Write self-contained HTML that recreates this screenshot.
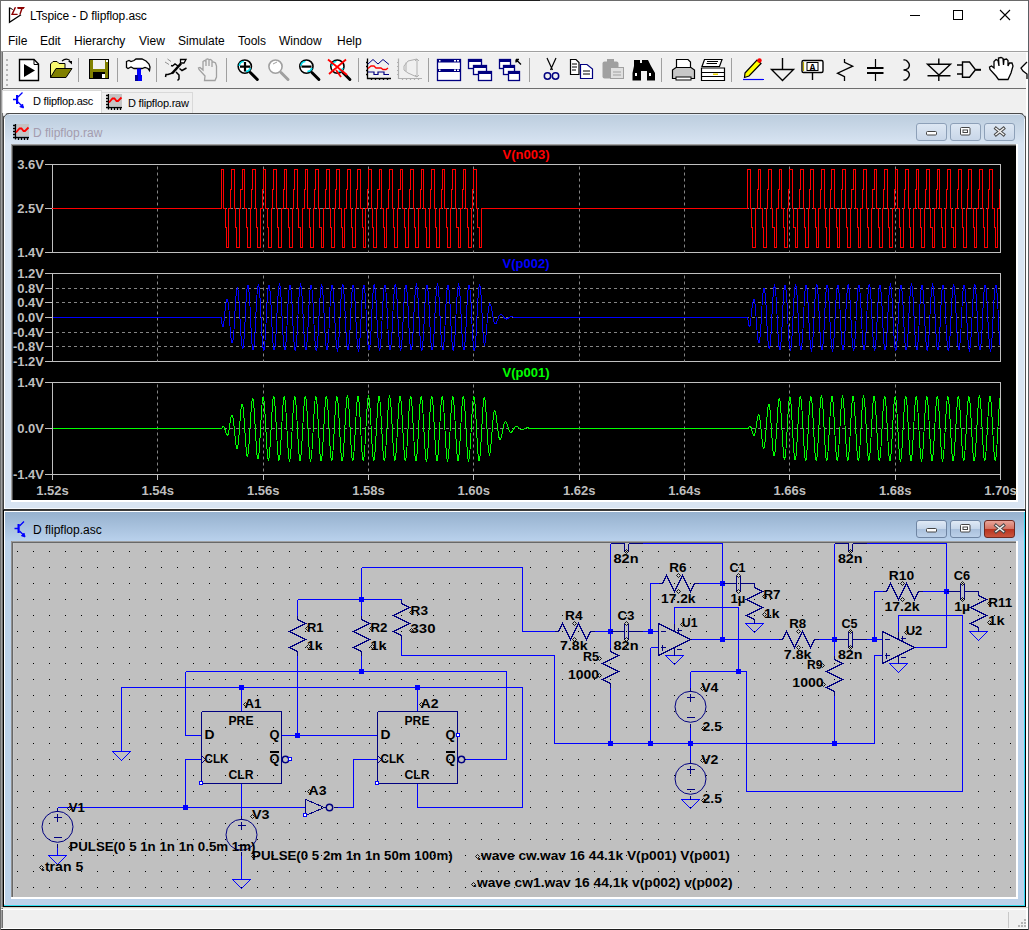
<!DOCTYPE html><html><head><meta charset="utf-8"><style>
html,body{margin:0;padding:0;}
body{width:1029px;height:930px;overflow:hidden;position:relative;background:#f0f0f0;font-family:"Liberation Sans",sans-serif;}
.a{position:absolute;}
.t{position:absolute;white-space:nowrap;font-size:12px;color:#000;line-height:14px;}
</style></head><body>

<div class="a" style="left:0px;top:0px;width:1029px;height:1px;background:#6a6a6a;"></div>
<div class="a" style="left:270px;top:0px;width:270px;height:1px;background:#1e1e1e;"></div>
<div class="a" style="left:0px;top:929px;width:1029px;height:1px;background:#1e1e1e;"></div>
<div class="a" style="left:0px;top:0px;width:1px;height:930px;background:#6e6e6e;"></div>
<div class="a" style="left:1px;top:51px;width:1px;height:878px;background:#a0a0a0;"></div>
<div class="a" style="left:2px;top:51px;width:1px;height:878px;background:#707070;"></div>
<div class="a" style="left:1028px;top:0px;width:1px;height:930px;background:#5a5e64;"></div>
<div class="a" style="left:1026px;top:51px;width:2px;height:878px;background:#ffffff;"></div>
<div class="a" style="left:1px;top:1px;width:1027px;height:50px;background:#fff;"></div>
<div class="a" style="left:1px;top:51px;width:1027px;height:1px;background:#a0a0a0;"></div>
<div class="t" style="left:30px;top:9px;font-size:12px;letter-spacing:-0.1px;">LTspice - D flipflop.asc</div>
<svg class="a" style="left:0;top:0" width="30" height="30" viewBox="0 0 30 30">
<path d="M9.5 7.5 V22.3 L21 14.8" fill="none" stroke="#000" stroke-width="1.3"/>
<path d="M9.8 7.8 L12.8 9.6" fill="none" stroke="#000" stroke-width="1"/>
<path d="M14.6 7.2 H16.2 L13.2 13.8 H17.4 L17.8 14.9 H11 Z" fill="#8b0000"/>
<path d="M17.2 7.1 H24.9 L23.6 8.9 H22.6 L20.6 14.4 H19.2 L21 8.9 H17.6 Z" fill="#8b0000"/>
</svg>
<div class="a" style="left:910px;top:15px;width:10px;height:1px;background:#000;"></div>
<div class="a" style="left:953px;top:10px;width:8px;height:8px;border:1px solid #000;"></div>
<svg class="a" style="left:999px;top:9px" width="12" height="12" viewBox="0 0 12 12"><path d="M1 1 L11 11 M11 1 L1 11" stroke="#000" stroke-width="1.1"/></svg>
<div class="t" style="left:8px;top:34px;">File</div>
<div class="t" style="left:40px;top:34px;">Edit</div>
<div class="t" style="left:74px;top:34px;">Hierarchy</div>
<div class="t" style="left:139px;top:34px;">View</div>
<div class="t" style="left:178px;top:34px;">Simulate</div>
<div class="t" style="left:238px;top:34px;">Tools</div>
<div class="t" style="left:279px;top:34px;">Window</div>
<div class="t" style="left:337px;top:34px;">Help</div>
<div class="a" style="left:3px;top:52px;width:1023px;height:1px;background:#f8f8f8;"></div>
<div class="a" style="left:3px;top:88px;width:1023px;height:1px;background:#6e6e6e;"></div>
<div class="a" style="left:3px;top:89px;width:1023px;height:1px;background:#fafafa;"></div>
<div class="a" style="left:6px;top:59px;width:2px;height:2px;background:#b4b4b4;"></div>
<div class="a" style="left:6px;top:64px;width:2px;height:2px;background:#b4b4b4;"></div>
<div class="a" style="left:6px;top:69px;width:2px;height:2px;background:#b4b4b4;"></div>
<div class="a" style="left:6px;top:74px;width:2px;height:2px;background:#b4b4b4;"></div>
<div class="a" style="left:6px;top:79px;width:2px;height:2px;background:#b4b4b4;"></div>
<div class="a" style="left:6px;top:84px;width:2px;height:2px;background:#b4b4b4;"></div>
<svg class="a" style="left:0;top:0" width="1029" height="90" viewBox="0 0 1029 90"><path d="M19.5 59.5 H34 L38.5 64 V80.5 H19.5 Z" fill="#fff" stroke="#000" stroke-width="1.4"/>
<path d="M34 59.5 V64.5 H38.5" fill="none" stroke="#000" stroke-width="1"/>
<path d="M24 64 L35 70.5 L24 77 Z" fill="#000"/>
<path d="M50.5 77.5 V64 L53 61.5 H57 L59 63.5 H65 V68.5" fill="#f8f870" stroke="#000" stroke-width="1"/>
<path d="M50.5 77.5 L56 68.5 H72 L66 77.5 Z" fill="#808000" stroke="#000" stroke-width="1"/>
<path d="M62 61 Q66 57.5 70 60.5" fill="none" stroke="#000" stroke-width="1.2"/><path d="M68 61 H72 V64.5 Z" fill="#000"/>
<rect x="89.5" y="59.5" width="19" height="19" fill="#808000" stroke="#000" stroke-width="1"/>
<rect x="93" y="60" width="12" height="9" fill="#f0f0f0"/>
<rect x="93" y="72" width="12" height="7" fill="#000"/>
<rect x="102" y="74" width="3" height="4" fill="#fff"/>
<rect x="106" y="60" width="2" height="2" fill="#fff"/>
<path d="M126.5 61.5 L129 60.5 L131 61.5 L134 60.5 L136 59 H142 L146 61 L149 64 L150 67 L149.5 70.5 L148 68.5 L145 67.5 L142 68.5 H134 L131 67 L128 68.5 L126.5 67.5 Z" fill="#fff" stroke="#000" stroke-width="1.3"/>
<rect x="137" y="68.5" width="4" height="12.5" fill="#0000ff"/><rect x="135" y="75" width="7" height="6" fill="#0000ff"/><rect x="135" y="75" width="3" height="6" fill="#00009a"/>
<path d="M180.5 59.5 H186 L184 63 H180.5 Z" fill="#fff" stroke="#000" stroke-width="1.3"/>
<path d="M181 63.5 L172 73.5" stroke="#000" stroke-width="2.6" fill="none"/>
<path d="M178 66 L175 64 L172.5 66 L171 65.5 M179.5 68.5 L182 70.5 L186.5 68 M172.5 73 L168 74.5 L166 74.5 L165.5 77 M176 72 L179 75 L179 79 L177.5 80.5" stroke="#000" stroke-width="1.5" fill="none"/>
<path d="M165 62 L169 64.5 M167.5 59 L171 61.5" stroke="#909090" stroke-width="1" fill="none"/>
<path d="M205 76 L199 69.5 L198.5 68 L200 67.5 L203 70 V61.5 L204.5 60.5 L206 61.5 V66 V59.5 L207.5 59 L209 59.5 V66 V60 L210.5 59.5 L212 60.5 V67 V62.5 L213.5 62 L215.5 63 L216.5 66 V77 L215 80.5 H204.5 Z" fill="none" stroke="#a0a0a0" stroke-width="1.3"/>
<line x1="250.3" y1="72.5" x2="257.3" y2="79.5" stroke="#000" stroke-width="3" stroke-linecap="round"/>
<circle cx="244.8" cy="66.6" r="6.6" fill="#fff" stroke="#000" stroke-width="1.6"/>
<path d="M243.8 61.5 A5 5 0 0 0 239.3 66" stroke="#00e0f0" stroke-width="1.6" fill="none"/>
<path d="M250.3 68 A5 5 0 0 1 245.8 71.5" stroke="#00e0f0" stroke-width="1.6" fill="none"/>
<path d="M240 66.6 H250 M245 62 V71.5" stroke="#000" stroke-width="2.2"/>
<line x1="281.0" y1="72.5" x2="288.0" y2="79.5" stroke="#a0a0a0" stroke-width="3" stroke-linecap="round"/>
<circle cx="275.5" cy="66.6" r="6.6" fill="#fff" stroke="#a0a0a0" stroke-width="1.6"/>
<path d="M273 64 L277 62" stroke="#a0a0a0" stroke-width="1"/>
<line x1="311.9" y1="72.5" x2="318.9" y2="79.5" stroke="#000" stroke-width="3" stroke-linecap="round"/>
<circle cx="306.4" cy="66.6" r="6.6" fill="#fff" stroke="#000" stroke-width="1.6"/>
<path d="M305.4 61.5 A5 5 0 0 0 300.9 66" stroke="#00e0f0" stroke-width="1.6" fill="none"/>
<path d="M311.9 68 A5 5 0 0 1 307.4 71.5" stroke="#00e0f0" stroke-width="1.6" fill="none"/>
<path d="M301.5 66.6 H311.5" stroke="#000" stroke-width="2.2"/>
<line x1="342.9" y1="72.5" x2="349.9" y2="79.5" stroke="#000" stroke-width="3" stroke-linecap="round"/>
<circle cx="337.4" cy="66.6" r="6.6" fill="#fff" stroke="#000" stroke-width="1.6"/>
<path d="M336.4 61.5 A5 5 0 0 0 331.9 66" stroke="#00e0f0" stroke-width="1.6" fill="none"/>
<path d="M342.9 68 A5 5 0 0 1 338.4 71.5" stroke="#00e0f0" stroke-width="1.6" fill="none"/>
<path d="M328 59.5 L347 75 M346 59.5 L329 74 M336 70 L341 77" stroke="#ff0000" stroke-width="1.8"/>
<path d="M367.5 58.5 V78.5 H391 M366 62.5 H368 M366 66.5 H368 M366 70.5 H368 M366 74.5 H368 M371.5 78 V80 M375.5 78 V80 M379.5 78 V80 M383.5 78 V80 M387.5 78 V80" stroke="#000" stroke-width="1.3" fill="none"/>
<path d="M368 64 L373 59.5 L378 64 L383 59.5 L389 64.5" stroke="#000080" stroke-width="1" fill="none"/>
<path d="M368 68.5 L371 66 H374 L376 68 H381 L383 69.5 L386 69.5 L388 68" stroke="#ff0000" stroke-width="1.3" fill="none"/>
<path d="M368 72 H374 V74.5 H378 V72 H384 V74.5 H389" stroke="#000080" stroke-width="1.2" fill="none"/>
<path d="M398.5 58.5 V78.5 H422 M397 62.5 H399 M397 66.5 H399 M397 70.5 H399 M397 74.5 H399 M402.5 78 V80 M406.5 78 V80 M410.5 78 V80 M414.5 78 V80 M418.5 78 V80" stroke="#b0b0b0" stroke-width="1.2" fill="none"/>
<path d="M404 66 L408 61 L417 59 V77 L408 73 L404 70 Z M406 62.5 V71.5 M417 59 L415 61 M417 59 L419 61 M417 77 L415 75 M417 77 L419 75" stroke="#b0b0b0" stroke-width="1" fill="none"/>
<rect x="437.5" y="59.5" width="23" height="21" fill="#fff" stroke="#000080" stroke-width="1.3"/><rect x="437.5" y="59.5" width="23" height="3" fill="#000080"/><rect x="437.5" y="69" width="23" height="3" fill="#000080"/><rect x="454" y="60" width="2" height="1.5" fill="#fff"/><rect x="457" y="60" width="2" height="1.5" fill="#fff"/><rect x="439" y="60" width="1.5" height="1.5" fill="#fff"/><rect x="454" y="69.5" width="2" height="1.5" fill="#fff"/><rect x="457" y="69.5" width="2" height="1.5" fill="#fff"/><rect x="439" y="69.5" width="1.5" height="1.5" fill="#fff"/>
<rect x="468.5" y="59.5" width="13" height="9" fill="#fff" stroke="#000080" stroke-width="1.3"/><rect x="468.5" y="59.5" width="13" height="2.5" fill="#000080"/>
<rect x="473.5" y="65.5" width="13" height="9" fill="#fff" stroke="#000080" stroke-width="1.3"/><rect x="473.5" y="65.5" width="13" height="2.5" fill="#000080"/>
<rect x="478.5" y="71.5" width="13" height="9" fill="#fff" stroke="#000080" stroke-width="1.3"/><rect x="478.5" y="71.5" width="13" height="2.5" fill="#000080"/>
<rect x="499.5" y="59.5" width="11" height="9" fill="#fff" stroke="#000080" stroke-width="1.3"/><rect x="499.5" y="59.5" width="11" height="2.5" fill="#000080"/>
<rect x="503.5" y="65.5" width="11" height="9" fill="#fff" stroke="#000080" stroke-width="1.3"/><rect x="503.5" y="65.5" width="11" height="2.5" fill="#000080"/>
<rect x="508.5" y="71.5" width="11" height="9" fill="#fff" stroke="#000080" stroke-width="1.3"/><rect x="508.5" y="71.5" width="11" height="2.5" fill="#000080"/>
<path d="M516 59.5 H519 M516 59.5 V62.5 M516.5 60 L521 64.5" stroke="#000" stroke-width="1.3" fill="none"/>
<rect x="78" y="58" width="1" height="24" fill="#a0a0a0"/>
<rect x="117" y="58" width="1" height="24" fill="#a0a0a0"/>
<rect x="156" y="58" width="1" height="24" fill="#a0a0a0"/>
<rect x="226" y="58" width="1" height="24" fill="#a0a0a0"/>
<rect x="358" y="58" width="1" height="24" fill="#a0a0a0"/>
<rect x="428" y="58" width="1" height="24" fill="#a0a0a0"/>
<rect x="529" y="58" width="1" height="24" fill="#a0a0a0"/>
<rect x="661" y="58" width="1" height="24" fill="#a0a0a0"/>
<rect x="731" y="58" width="1" height="24" fill="#a0a0a0"/>
<path d="M547 58 L552.5 70 M556 58 L550.5 70" stroke="#000" stroke-width="1.2"/>
<circle cx="547.5" cy="76" r="3.2" fill="none" stroke="#000080" stroke-width="1.5"/><circle cx="555.5" cy="76" r="3.2" fill="none" stroke="#000080" stroke-width="1.5"/>
<path d="M570.5 59.5 H576 L579 62.5 V74.5 H570.5 Z" fill="#fff" stroke="#000" stroke-width="1.2"/><path d="M572 64 H577 M572 67 H577 M572 70 H576" stroke="#000" stroke-width="1"/>
<path d="M580.5 64.5 H587 L592.5 69 V78.5 H580.5 Z" fill="#fff" stroke="#000080" stroke-width="1.2"/><path d="M583 71 H590 M583 74 H590" stroke="#000" stroke-width="1"/>
<rect x="602.5" y="61.5" width="16" height="17" rx="2" fill="#a0a0a0"/><rect x="607" y="59" width="7" height="3" fill="#a0a0a0"/><rect x="610.5" y="67.5" width="13" height="11" fill="#e0e0e0" stroke="#a0a0a0"/><path d="M613 72 H621 M613 75 H621" stroke="#a0a0a0"/>
<path d="M634 60 H640 V63 H642 V60 H648 L651 66 L655 73 V80.5 H647 V71 H641 V80.5 H632.5 V73 L634 66 Z" fill="#000"/><rect x="635" y="73" width="2" height="3" fill="#fff"/><rect x="649" y="73" width="2" height="3" fill="#fff"/>
<path d="M676.5 59.5 H688 L690.5 62 V67.5 H676.5 Z" fill="#fff" stroke="#000" stroke-width="1.2"/><path d="M672.5 70 L676 67.5 H691 L694.5 70 V78.5 H672.5 Z" fill="#c8c8c8" stroke="#000" stroke-width="1.2"/><rect x="676" y="77" width="15" height="3" fill="#fff" stroke="#000"/>
<path d="M704.5 59.5 H722 L719.5 66.5 H702 Z" fill="#fff" stroke="#000" stroke-width="1.2"/><path d="M707 61.5 H718 M706.5 63.5 H717" stroke="#000"/><path d="M701.5 68 H724.5 V80.5 H701.5 Z" fill="#fff" stroke="#000" stroke-width="1.2"/><path d="M701.5 72.5 H724.5 M701.5 76.5 H724.5" stroke="#000"/><rect x="713" y="73.5" width="5" height="1.5" fill="#e8d000"/>
<path d="M745 73 L757 60 L761 63.5 L749 76 L744.5 77.5 Z" fill="#ffff00" stroke="#000" stroke-width="1.2"/><circle cx="759.5" cy="60.5" r="2.2" fill="#ff0000"/><path d="M743 79.5 H764" stroke="#0000ff" stroke-width="1.2"/>
<path d="M782.5 58 V69.5 M771.5 69.5 H793.5 L782.5 80.5 Z" fill="none" stroke="#000" stroke-width="1.4"/>
<rect x="802" y="60.5" width="21" height="12" rx="1.5" fill="#fff" stroke="#000" stroke-width="1.4"/><path d="M803.5 62 V71" stroke="#b8a800" stroke-width="1.2"/><rect x="807" y="62.5" width="11" height="8" fill="none" stroke="#000" stroke-width="1"/><path d="M812.5 73 V80" stroke="#000" stroke-width="1.4"/><text x="812.5" y="70.5" text-anchor="middle" font-family="Liberation Mono" font-weight="bold" font-size="10" fill="#000">A</text>
<path d="M844.5 59 V62.3 L852.7 66.2 L837.5 73.2 L844.5 76.7 V81" fill="none" stroke="#000" stroke-width="1.3"/>
<path d="M875.5 59 V67 M875.5 73 V81" fill="none" stroke="#000" stroke-width="1.2"/><path d="M867 68 H883.5 M867 73 H883.5" fill="none" stroke="#000" stroke-width="2"/>
<path d="M903.5 60 Q906 59.5 907.5 61.5 Q911 65 908 68.5 Q906 70 903.5 70 Q906 70 908 71.5 Q911 75 907.5 78.5 Q906 80.5 903.5 80" fill="none" stroke="#000" stroke-width="1.4"/>
<path d="M927.5 64.3 H950.5 L939 75 Z M927.5 75.8 H950.5 M938.8 58.5 V64 M938.8 76 V81" fill="none" stroke="#000" stroke-width="1.4"/>
<path d="M962.5 62 H969.5 L975.5 69.8 L969.5 77.3 H962.5 Z M957 65 H962.5 M957 74 H962.5" fill="none" stroke="#000" stroke-width="1.4"/><path d="M975.5 69.8 H981" stroke="#000" stroke-width="2"/>
<path d="M996 76 L990 69.5 L989.5 67 L991.5 66 L994 68 V61.5 L996 59.5 L998 60.5 L999 66 L998.5 58 L1001 57.5 L1003 58.5 L1003.5 65 L1004 59.5 L1006.5 59 L1008 60.5 L1008 66 L1009.5 63 L1012 63 L1013 66 L1011 73 L1008 79.5 H998.5 Z" fill="#fff" stroke="#000" stroke-width="1.3"/>
<path d="M1027 62 L1024 65 L1021 68 L1023 71 L1027 74 V79" fill="#fff" stroke="#000" stroke-width="1.3"/></svg>
<div class="a" style="left:3px;top:89px;width:1023px;height:24px;background:#f0f0f0;"></div>
<div class="a" style="left:2px;top:90px;width:100px;height:23px;background:#d9d9d9;"></div>
<div class="a" style="left:3px;top:91px;width:98px;height:22px;background:#fff;"></div>
<div class="a" style="left:101px;top:92px;width:92px;height:21px;background:#d9d9d9;"></div>
<div class="a" style="left:102px;top:93px;width:90px;height:20px;background:#f0f0f0;"></div>
<div class="t" style="left:33px;top:94px;font-size:11px;letter-spacing:-0.2px;">D flipflop.asc</div>
<div class="t" style="left:128px;top:96px;font-size:11px;letter-spacing:-0.2px;">D flipflop.raw</div>
<svg class="a" style="left:0;top:0" width="200" height="145" viewBox="0 0 200 145"><path d="M13 99.5 H16.5 M18 97 L22.5 92.5 M18 102 L23.5 107.5" stroke="#0000ff" stroke-width="1.3" fill="none"/><rect x="16" y="95" width="2.2" height="9" fill="#0000ff"/><path d="M23.5 108 L19.8 106.8 L22.6 104 Z" fill="#0000ff" stroke="#0000ff" stroke-width="0.8"/><g transform="translate(0 0)"><rect x="110" y="94" width="12" height="12" fill="#c4c4c4"/><path d="M108.5 94 V109.5 M106 107.5 H122 M106 95.5 H108 M106 98.5 H108 M106 101.5 H108 M106 104.5 H108 M111.5 107 V110 M114.5 107 V110 M117.5 107 V110 M120.5 107 V110" stroke="#000" stroke-width="1.4" fill="none"/><path d="M109 102.5 L112.5 98.5 H114.5 L116.5 101 H118 L121.5 97.5" stroke="#ff0000" stroke-width="1.8" fill="none"/></g></svg>
<div class="a" style="left:3px;top:113px;width:1023px;height:397px;background:#d8e4f2;"></div>
<div class="a" style="left:3px;top:113px;width:1px;height:397px;background:#3c3c3c;"></div>
<div class="a" style="left:4px;top:114px;width:1px;height:395px;background:#fff;"></div>
<div class="a" style="left:1025px;top:113px;width:1px;height:397px;background:#505050;"></div>
<div class="a" style="left:1024px;top:114px;width:1px;height:395px;background:#eef4fc;"></div>
<div class="a" style="left:6px;top:113px;width:1017px;height:1px;background:#4a4a4a;"></div>
<div class="a" style="left:5px;top:114px;width:1019px;height:1px;background:#e3ebf5;"></div>
<div class="a" style="left:5px;top:115px;width:1019px;height:29px;background:linear-gradient(#bccdde,#d8e4f2);"></div>
<div class="t" style="left:33px;top:126px;font-size:12px;color:#a49cae;">D flipflop.raw</div>
<svg class="a" style="left:0;top:0" width="1029" height="130" viewBox="0 0 1029 130"><path d="M3 113 H9 A5.5 5.5 0 0 0 3 119 Z" fill="#f0f0f0"/><path d="M3.5 119.5 A6 6 0 0 1 9.5 113.5" fill="none" stroke="#4a4a4a" stroke-width="1"/><path d="M1026 113 H1020 A5.5 5.5 0 0 1 1026 119 Z" fill="#f0f0f0"/><path d="M1019.5 113.5 A6 6 0 0 1 1025.5 119.5" fill="none" stroke="#4a4a4a" stroke-width="1"/></svg>
<div class="a" style="left:916px;top:123px;width:31px;height:18px;border:1px solid #8da0b8;border-radius:3px;box-sizing:border-box;background:linear-gradient(#dde7f3,#c8d6e8);"></div>
<div class="a" style="left:950px;top:123px;width:31px;height:18px;border:1px solid #8da0b8;border-radius:3px;box-sizing:border-box;background:linear-gradient(#dde7f3,#c8d6e8);"></div>
<div class="a" style="left:984px;top:123px;width:31px;height:18px;border:1px solid #8da0b8;border-radius:3px;box-sizing:border-box;background:linear-gradient(#dde7f3,#c8d6e8);"></div>
<svg class="a" style="left:0;top:0" width="1029" height="930" viewBox="0 0 1029 930"><rect x="926.5" y="131.5" width="10" height="3.5" rx="1" fill="#fff" stroke="#444" stroke-width="1"/><rect x="960.5" y="127.5" width="9.5" height="7.5" rx="1" fill="#fff" stroke="#444" stroke-width="1"/><rect x="963" y="130.0" width="4.5" height="2.5" fill="none" stroke="#444" stroke-width="1"/><path d="M996 128.5 L1003.5 134.5 M1003.5 128.5 L996 134.5" stroke="#4a4a4a" stroke-width="3.4" stroke-linecap="square"/><path d="M996 128.5 L1003.5 134.5 M1003.5 128.5 L996 134.5" stroke="#f4f4f4" stroke-width="1.5" stroke-linecap="square"/></svg>
<svg class="a" style="left:0;top:0" width="200" height="145" viewBox="0 0 200 145"><g transform="translate(-93 30)"><rect x="110" y="94" width="12" height="12" fill="#c4c4c4"/><path d="M108.5 94 V109.5 M106 107.5 H122 M106 95.5 H108 M106 98.5 H108 M106 101.5 H108 M106 104.5 H108 M111.5 107 V110 M114.5 107 V110 M117.5 107 V110 M120.5 107 V110" stroke="#000" stroke-width="1.4" fill="none"/><path d="M109 102.5 L112.5 98.5 H114.5 L116.5 101 H118 L121.5 97.5" stroke="#ff0000" stroke-width="1.8" fill="none"/></g></svg>
<div class="a" style="left:11px;top:144px;width:1005px;height:1px;background:#a0a0a0;"></div>
<div class="a" style="left:11px;top:144px;width:1px;height:356px;background:#a0a0a0;"></div>
<div class="a" style="left:12px;top:145px;width:1004px;height:1px;background:#505050;"></div>
<div class="a" style="left:12px;top:145px;width:1px;height:355px;background:#505050;"></div>
<div class="a" style="left:13px;top:146px;width:1003px;height:354px;background:#000;"></div>
<div class="a" style="left:11px;top:500px;width:1007px;height:2px;background:#fff;"></div>
<div class="a" style="left:1016px;top:144px;width:2px;height:358px;background:#fff;"></div>
<div class="a" style="left:5px;top:508px;width:1019px;height:1px;background:#f4f8fc;"></div>
<div class="a" style="left:3px;top:509px;width:1023px;height:1px;background:#2e2e2e;"></div>
<svg class="a" style="left:0;top:0" width="1029" height="930" viewBox="0 0 1029 930">
<rect x="52.5" y="164.5" width="948" height="88.0" fill="none" stroke="#c0c0c0" stroke-width="1"/>
<line x1="157.5" y1="166.5" x2="157.5" y2="252.5" stroke="#858585" stroke-dasharray="3,3"/>
<line x1="263.5" y1="166.5" x2="263.5" y2="252.5" stroke="#858585" stroke-dasharray="3,3"/>
<line x1="368.5" y1="166.5" x2="368.5" y2="252.5" stroke="#858585" stroke-dasharray="3,3"/>
<line x1="473.5" y1="166.5" x2="473.5" y2="252.5" stroke="#858585" stroke-dasharray="3,3"/>
<line x1="579.5" y1="166.5" x2="579.5" y2="252.5" stroke="#858585" stroke-dasharray="3,3"/>
<line x1="684.5" y1="166.5" x2="684.5" y2="252.5" stroke="#858585" stroke-dasharray="3,3"/>
<line x1="789.5" y1="166.5" x2="789.5" y2="252.5" stroke="#858585" stroke-dasharray="3,3"/>
<line x1="895.5" y1="166.5" x2="895.5" y2="252.5" stroke="#858585" stroke-dasharray="3,3"/>
<line x1="56" y1="208.5" x2="1000" y2="208.5" stroke="#858585" stroke-dasharray="3,3"/>
<line x1="45" y1="164.5" x2="52.5" y2="164.5" stroke="#c0c0c0"/>
<text x="44" y="169.0" text-anchor="end" font-family="Liberation Sans" font-weight="bold" font-size="13" fill="#bebebe">3.6V</text>
<line x1="45" y1="208.5" x2="52.5" y2="208.5" stroke="#c0c0c0"/>
<text x="44" y="213.0" text-anchor="end" font-family="Liberation Sans" font-weight="bold" font-size="13" fill="#bebebe">2.5V</text>
<line x1="45" y1="252.5" x2="52.5" y2="252.5" stroke="#c0c0c0"/>
<text x="44" y="257.0" text-anchor="end" font-family="Liberation Sans" font-weight="bold" font-size="13" fill="#bebebe">1.4V</text>
<rect x="52.5" y="273.5" width="948" height="88.0" fill="none" stroke="#c0c0c0" stroke-width="1"/>
<line x1="157.5" y1="275.5" x2="157.5" y2="361.5" stroke="#858585" stroke-dasharray="3,3"/>
<line x1="263.5" y1="275.5" x2="263.5" y2="361.5" stroke="#858585" stroke-dasharray="3,3"/>
<line x1="368.5" y1="275.5" x2="368.5" y2="361.5" stroke="#858585" stroke-dasharray="3,3"/>
<line x1="473.5" y1="275.5" x2="473.5" y2="361.5" stroke="#858585" stroke-dasharray="3,3"/>
<line x1="579.5" y1="275.5" x2="579.5" y2="361.5" stroke="#858585" stroke-dasharray="3,3"/>
<line x1="684.5" y1="275.5" x2="684.5" y2="361.5" stroke="#858585" stroke-dasharray="3,3"/>
<line x1="789.5" y1="275.5" x2="789.5" y2="361.5" stroke="#858585" stroke-dasharray="3,3"/>
<line x1="895.5" y1="275.5" x2="895.5" y2="361.5" stroke="#858585" stroke-dasharray="3,3"/>
<line x1="56" y1="288.5" x2="1000" y2="288.5" stroke="#858585" stroke-dasharray="3,3"/>
<line x1="56" y1="302.5" x2="1000" y2="302.5" stroke="#858585" stroke-dasharray="3,3"/>
<line x1="56" y1="317.5" x2="1000" y2="317.5" stroke="#858585" stroke-dasharray="3,3"/>
<line x1="56" y1="332.5" x2="1000" y2="332.5" stroke="#858585" stroke-dasharray="3,3"/>
<line x1="56" y1="346.5" x2="1000" y2="346.5" stroke="#858585" stroke-dasharray="3,3"/>
<line x1="45" y1="273.5" x2="52.5" y2="273.5" stroke="#c0c0c0"/>
<text x="44" y="278.0" text-anchor="end" font-family="Liberation Sans" font-weight="bold" font-size="13" fill="#bebebe">1.2V</text>
<line x1="45" y1="288.5" x2="52.5" y2="288.5" stroke="#c0c0c0"/>
<text x="44" y="292.7" text-anchor="end" font-family="Liberation Sans" font-weight="bold" font-size="13" fill="#bebebe">0.8V</text>
<line x1="45" y1="302.5" x2="52.5" y2="302.5" stroke="#c0c0c0"/>
<text x="44" y="307.3" text-anchor="end" font-family="Liberation Sans" font-weight="bold" font-size="13" fill="#bebebe">0.4V</text>
<line x1="45" y1="317.5" x2="52.5" y2="317.5" stroke="#c0c0c0"/>
<text x="44" y="322.0" text-anchor="end" font-family="Liberation Sans" font-weight="bold" font-size="13" fill="#bebebe">0.0V</text>
<line x1="45" y1="332.5" x2="52.5" y2="332.5" stroke="#c0c0c0"/>
<text x="44" y="336.7" text-anchor="end" font-family="Liberation Sans" font-weight="bold" font-size="13" fill="#bebebe">-0.4V</text>
<line x1="45" y1="346.5" x2="52.5" y2="346.5" stroke="#c0c0c0"/>
<text x="44" y="351.3" text-anchor="end" font-family="Liberation Sans" font-weight="bold" font-size="13" fill="#bebebe">-0.8V</text>
<line x1="45" y1="361.5" x2="52.5" y2="361.5" stroke="#c0c0c0"/>
<text x="44" y="366.0" text-anchor="end" font-family="Liberation Sans" font-weight="bold" font-size="13" fill="#bebebe">-1.2V</text>
<rect x="52.5" y="382.5" width="948" height="92.0" fill="none" stroke="#c0c0c0" stroke-width="1"/>
<line x1="157.5" y1="384.5" x2="157.5" y2="474.5" stroke="#858585" stroke-dasharray="3,3"/>
<line x1="263.5" y1="384.5" x2="263.5" y2="474.5" stroke="#858585" stroke-dasharray="3,3"/>
<line x1="368.5" y1="384.5" x2="368.5" y2="474.5" stroke="#858585" stroke-dasharray="3,3"/>
<line x1="473.5" y1="384.5" x2="473.5" y2="474.5" stroke="#858585" stroke-dasharray="3,3"/>
<line x1="579.5" y1="384.5" x2="579.5" y2="474.5" stroke="#858585" stroke-dasharray="3,3"/>
<line x1="684.5" y1="384.5" x2="684.5" y2="474.5" stroke="#858585" stroke-dasharray="3,3"/>
<line x1="789.5" y1="384.5" x2="789.5" y2="474.5" stroke="#858585" stroke-dasharray="3,3"/>
<line x1="895.5" y1="384.5" x2="895.5" y2="474.5" stroke="#858585" stroke-dasharray="3,3"/>
<line x1="56" y1="428.5" x2="1000" y2="428.5" stroke="#858585" stroke-dasharray="3,3"/>
<line x1="45" y1="382.5" x2="52.5" y2="382.5" stroke="#c0c0c0"/>
<text x="44" y="387.0" text-anchor="end" font-family="Liberation Sans" font-weight="bold" font-size="13" fill="#bebebe">1.4V</text>
<line x1="45" y1="428.5" x2="52.5" y2="428.5" stroke="#c0c0c0"/>
<text x="44" y="433.0" text-anchor="end" font-family="Liberation Sans" font-weight="bold" font-size="13" fill="#bebebe">0.0V</text>
<line x1="45" y1="474.5" x2="52.5" y2="474.5" stroke="#c0c0c0"/>
<text x="44" y="479.0" text-anchor="end" font-family="Liberation Sans" font-weight="bold" font-size="13" fill="#bebebe">-1.4V</text>
<line x1="52.5" y1="474.5" x2="52.5" y2="480" stroke="#c0c0c0"/>
<text x="52.5" y="494.5" text-anchor="middle" font-family="Liberation Sans" font-weight="bold" font-size="13" fill="#bebebe">1.52s</text>
<line x1="157.5" y1="474.5" x2="157.5" y2="480" stroke="#c0c0c0"/>
<text x="157.8" y="494.5" text-anchor="middle" font-family="Liberation Sans" font-weight="bold" font-size="13" fill="#bebebe">1.54s</text>
<line x1="263.5" y1="474.5" x2="263.5" y2="480" stroke="#c0c0c0"/>
<text x="263.2" y="494.5" text-anchor="middle" font-family="Liberation Sans" font-weight="bold" font-size="13" fill="#bebebe">1.56s</text>
<line x1="368.5" y1="474.5" x2="368.5" y2="480" stroke="#c0c0c0"/>
<text x="368.5" y="494.5" text-anchor="middle" font-family="Liberation Sans" font-weight="bold" font-size="13" fill="#bebebe">1.58s</text>
<line x1="473.5" y1="474.5" x2="473.5" y2="480" stroke="#c0c0c0"/>
<text x="473.8" y="494.5" text-anchor="middle" font-family="Liberation Sans" font-weight="bold" font-size="13" fill="#bebebe">1.60s</text>
<line x1="579.5" y1="474.5" x2="579.5" y2="480" stroke="#c0c0c0"/>
<text x="579.2" y="494.5" text-anchor="middle" font-family="Liberation Sans" font-weight="bold" font-size="13" fill="#bebebe">1.62s</text>
<line x1="684.5" y1="474.5" x2="684.5" y2="480" stroke="#c0c0c0"/>
<text x="684.5" y="494.5" text-anchor="middle" font-family="Liberation Sans" font-weight="bold" font-size="13" fill="#bebebe">1.64s</text>
<line x1="789.5" y1="474.5" x2="789.5" y2="480" stroke="#c0c0c0"/>
<text x="789.8" y="494.5" text-anchor="middle" font-family="Liberation Sans" font-weight="bold" font-size="13" fill="#bebebe">1.66s</text>
<line x1="895.5" y1="474.5" x2="895.5" y2="480" stroke="#c0c0c0"/>
<text x="895.2" y="494.5" text-anchor="middle" font-family="Liberation Sans" font-weight="bold" font-size="13" fill="#bebebe">1.68s</text>
<line x1="1000.5" y1="474.5" x2="1000.5" y2="480" stroke="#c0c0c0"/>
<text x="1000.5" y="494.5" text-anchor="middle" font-family="Liberation Sans" font-weight="bold" font-size="13" fill="#bebebe">1.70s</text>
<text x="526" y="159" text-anchor="middle" font-family="Liberation Sans" font-weight="bold" font-size="13" fill="#ff0000">V(n003)</text>
<text x="526" y="268" text-anchor="middle" font-family="Liberation Sans" font-weight="bold" font-size="13" fill="#0000ff">V(p002)</text>
<text x="526" y="377" text-anchor="middle" font-family="Liberation Sans" font-weight="bold" font-size="13" fill="#00ff00">V(p001)</text>
<defs><clipPath id="pc"><rect x="52" y="146" width="948" height="354"/></clipPath></defs><g clip-path="url(#pc)">
<path d="M49.9 208.5 H221.5 V169.5 H223.5 V208.5 H225.5 V227.5 H226.5 V247.5 H228.5 V208.5 H230.5 V189.5 H231.5 V169.5 H234.5 V208.5 H235.5 V227.5 H236.5 V247.5 H239.5 V208.5 H240.5 V189.5 H242.5 V169.5 H244.5 V208.5 H246.5 V227.5 H247.5 V247.5 H250.5 V208.5 H251.5 V189.5 H252.5 V169.5 H255.5 V208.5 H256.5 V227.5 H257.5 V247.5 H260.5 V208.5 H262.5 V189.5 H263.5 V169.5 H265.5 V208.5 H267.5 V227.5 H268.5 V247.5 H271.5 V208.5 H272.5 V189.5 H273.5 V169.5 H276.5 V208.5 H277.5 V227.5 H278.5 V247.5 H281.5 V208.5 H283.5 V189.5 H284.5 V169.5 H286.5 V208.5 H288.5 V227.5 H289.5 V247.5 H292.5 V208.5 H293.5 V189.5 H294.5 V169.5 H297.5 V208.5 H298.5 V227.5 H300.5 V247.5 H302.5 V208.5 H304.5 V189.5 H305.5 V169.5 H307.5 V208.5 H309.5 V227.5 H310.5 V247.5 H313.5 V208.5 H314.5 V189.5 H315.5 V169.5 H318.5 V208.5 H319.5 V227.5 H321.5 V247.5 H323.5 V208.5 H325.5 V189.5 H326.5 V169.5 H329.5 V208.5 H330.5 V227.5 H331.5 V247.5 H334.5 V208.5 H335.5 V189.5 H336.5 V169.5 H339.5 V208.5 H341.5 V227.5 H342.5 V247.5 H344.5 V208.5 H346.5 V189.5 H347.5 V169.5 H350.5 V208.5 H351.5 V227.5 H352.5 V247.5 H355.5 V208.5 H356.5 V189.5 H357.5 V169.5 H360.5 V208.5 H362.5 V227.5 H363.5 V247.5 H365.5 V208.5 H367.5 V189.5 H368.5 V169.5 H371.5 V208.5 H372.5 V227.5 H373.5 V247.5 H376.5 V208.5 H377.5 V189.5 H379.5 V169.5 H381.5 V208.5 H383.5 V227.5 H384.5 V247.5 H386.5 V208.5 H388.5 V189.5 H389.5 V169.5 H392.5 V208.5 H393.5 V227.5 H394.5 V247.5 H397.5 V208.5 H398.5 V189.5 H400.5 V169.5 H402.5 V208.5 H404.5 V227.5 H405.5 V247.5 H408.5 V208.5 H409.5 V189.5 H410.5 V169.5 H413.5 V208.5 H414.5 V227.5 H415.5 V247.5 H418.5 V208.5 H420.5 V189.5 H421.5 V169.5 H423.5 V208.5 H425.5 V227.5 H426.5 V247.5 H429.5 V208.5 H430.5 V189.5 H431.5 V169.5 H434.5 V208.5 H435.5 V227.5 H436.5 V247.5 H439.5 V208.5 H441.5 V189.5 H442.5 V169.5 H444.5 V208.5 H446.5 V227.5 H447.5 V247.5 H450.5 V208.5 H451.5 V189.5 H452.5 V169.5 H455.5 V208.5 H456.5 V227.5 H458.5 V247.5 H460.5 V208.5 H462.5 V189.5 H463.5 V169.5 H465.5 V208.5 H467.5 V227.5 H468.5 V247.5 H471.5 V208.5 H472.5 V189.5 H473.5 V169.5 H476.5 V208.5 H477.5 V227.5 H479.5 V247.5 H481.5 V208.5 H747.5 V169.5 H750.5 V208.5 H751.5 V227.5 H752.5 V247.5 H755.5 V208.5 H757.5 V189.5 H758.5 V169.5 H760.5 V208.5 H762.5 V227.5 H763.5 V247.5 H766.5 V208.5 H767.5 V189.5 H768.5 V169.5 H771.5 V208.5 H772.5 V227.5 H774.5 V247.5 H776.5 V208.5 H778.5 V189.5 H779.5 V169.5 H781.5 V208.5 H783.5 V227.5 H784.5 V247.5 H787.5 V208.5 H788.5 V189.5 H789.5 V169.5 H792.5 V208.5 H793.5 V227.5 H795.5 V247.5 H797.5 V208.5 H799.5 V189.5 H800.5 V169.5 H803.5 V208.5 H804.5 V227.5 H805.5 V247.5 H808.5 V208.5 H809.5 V189.5 H810.5 V169.5 H813.5 V208.5 H815.5 V227.5 H816.5 V247.5 H818.5 V208.5 H820.5 V189.5 H821.5 V169.5 H824.5 V208.5 H825.5 V227.5 H826.5 V247.5 H829.5 V208.5 H830.5 V189.5 H831.5 V169.5 H834.5 V208.5 H836.5 V227.5 H837.5 V247.5 H839.5 V208.5 H841.5 V189.5 H842.5 V169.5 H845.5 V208.5 H846.5 V227.5 H847.5 V247.5 H850.5 V208.5 H851.5 V189.5 H853.5 V169.5 H855.5 V208.5 H857.5 V227.5 H858.5 V247.5 H860.5 V208.5 H862.5 V189.5 H863.5 V169.5 H866.5 V208.5 H867.5 V227.5 H868.5 V247.5 H871.5 V208.5 H872.5 V189.5 H874.5 V169.5 H876.5 V208.5 H878.5 V227.5 H879.5 V247.5 H882.5 V208.5 H883.5 V189.5 H884.5 V169.5 H887.5 V208.5 H888.5 V227.5 H889.5 V247.5 H892.5 V208.5 H894.5 V189.5 H895.5 V169.5 H897.5 V208.5 H899.5 V227.5 H900.5 V247.5 H903.5 V208.5 H904.5 V189.5 H905.5 V169.5 H908.5 V208.5 H909.5 V227.5 H910.5 V247.5 H913.5 V208.5 H915.5 V189.5 H916.5 V169.5 H918.5 V208.5 H920.5 V227.5 H921.5 V247.5 H924.5 V208.5 H925.5 V189.5 H926.5 V169.5 H929.5 V208.5 H930.5 V227.5 H932.5 V247.5 H934.5 V208.5 H936.5 V189.5 H937.5 V169.5 H939.5 V208.5 H941.5 V227.5 H942.5 V247.5 H945.5 V208.5 H946.5 V189.5 H947.5 V169.5 H950.5 V208.5 H951.5 V227.5 H953.5 V247.5 H955.5 V208.5 H957.5 V189.5 H958.5 V169.5 H961.5 V208.5 H962.5 V227.5 H963.5 V247.5 H966.5 V208.5 H967.5 V189.5 H968.5 V169.5 H971.5 V208.5 H973.5 V227.5 H974.5 V247.5 H976.5 V208.5 H978.5 V189.5 H979.5 V169.5 H982.5 V208.5 H983.5 V227.5 H984.5 V247.5 H987.5 V208.5 H988.5 V189.5 H989.5 V169.5 H992.5 V208.5 H994.5 V227.5 H995.5 V247.5 H997.5 V208.5 H999.5 V189.5 H1000.5 V169.5 H1003.5 V208.5 H1004.5 V227.5 H1005.5 V247.5 H1008.5 V208.5 H1000.5" fill="none" stroke="#ff0000" stroke-width="1" shape-rendering="crispEdges"/>
<path d="M52.5 317.5 L221.0 317.5 L221.5 321.4 L222.0 324.3 L222.5 326.0 L223.0 326.4 L223.5 325.8 L224.0 321.4 L224.5 316.0 L225.0 311.6 L225.5 306.8 L226.0 303.2 L226.5 300.6 L227.0 298.9 L227.5 299.4 L228.0 301.6 L228.5 305.2 L229.0 310.4 L229.5 319.1 L230.0 326.4 L230.5 332.5 L231.0 338.0 L231.5 340.9 L232.0 343.2 L232.5 342.8 L233.0 340.1 L233.5 335.5 L234.0 329.7 L234.5 320.7 L235.0 311.1 L235.5 303.4 L236.0 296.4 L236.5 291.7 L237.0 289.1 L237.5 288.2 L238.0 290.2 L238.5 294.6 L239.0 300.6 L239.5 308.0 L240.0 319.1 L240.5 328.5 L241.0 336.1 L241.5 342.8 L242.0 346.4 L242.5 348.6 L243.0 347.9 L243.5 344.4 L244.0 338.9 L244.5 332.0 L245.0 322.0 L245.5 311.2 L246.0 302.4 L246.5 294.7 L247.0 289.3 L247.5 286.5 L248.0 285.5 L248.5 287.6 L249.0 292.3 L249.5 298.7 L250.0 306.3 L250.5 318.1 L251.0 328.2 L251.5 336.3 L252.0 343.5 L252.5 347.4 L253.0 349.8 L253.5 349.3 L254.0 345.9 L254.5 340.2 L255.0 333.1 L255.5 323.2 L256.0 312.0 L256.5 302.8 L257.0 294.8 L257.5 289.1 L258.0 286.1 L258.5 284.9 L259.0 286.8 L259.5 291.4 L260.0 297.8 L260.5 305.4 L261.0 317.2 L261.5 327.6 L262.0 335.8 L262.5 343.3 L263.0 347.5 L263.5 350.0 L264.0 349.7 L264.5 346.4 L265.0 340.9 L265.5 333.8 L266.0 324.1 L266.5 312.7 L267.0 303.3 L267.5 295.3 L268.0 289.3 L268.5 286.2 L269.0 284.7 L269.5 286.4 L270.0 290.9 L270.5 297.2 L271.0 304.8 L271.5 316.4 L272.0 326.9 L272.5 335.3 L273.0 342.9 L273.5 347.4 L274.0 349.9 L274.5 349.9 L275.0 346.8 L275.5 341.4 L276.0 334.4 L276.5 324.9 L277.0 313.5 L277.5 303.9 L278.0 295.8 L278.5 289.6 L279.0 286.4 L279.5 284.7 L280.0 286.2 L280.5 290.5 L281.0 296.7 L281.5 304.2 L282.0 315.6 L282.5 326.3 L283.0 334.8 L283.5 342.5 L284.0 347.2 L284.5 349.8 L285.0 350.0 L285.5 347.1 L286.0 341.8 L286.5 334.9 L287.0 325.8 L287.5 314.2 L288.0 304.5 L288.5 296.4 L289.0 289.9 L289.5 286.7 L290.0 284.7 L290.5 286.0 L291.0 290.1 L291.5 296.3 L292.0 303.7 L292.5 314.8 L293.0 325.6 L293.5 334.3 L294.0 342.1 L294.5 347.0 L295.0 349.7 L295.5 350.1 L296.0 347.4 L296.5 342.2 L297.0 335.4 L297.5 326.6 L298.0 314.9 L298.5 305.0 L299.0 296.9 L299.5 290.2 L300.0 286.8 L300.5 284.7 L301.0 285.8 L301.5 289.8 L302.0 295.8 L302.5 303.2 L303.0 314.0 L303.5 325.0 L304.0 333.8 L304.5 341.6 L305.0 346.8 L305.5 349.6 L306.0 350.2 L306.5 347.7 L307.0 342.6 L307.5 335.9 L308.0 327.4 L308.5 315.6 L309.0 305.6 L309.5 297.5 L310.0 290.5 L310.5 287.0 L311.0 284.7 L311.5 285.6 L312.0 289.4 L312.5 295.4 L313.0 302.7 L313.5 313.2 L314.0 324.3 L314.5 333.3 L315.0 341.2 L315.5 346.5 L316.0 349.4 L316.5 350.2 L317.0 347.9 L317.5 343.0 L318.0 336.4 L318.5 328.3 L319.0 316.4 L319.5 306.2 L320.0 298.1 L320.5 290.9 L321.0 287.1 L321.5 284.8 L322.0 285.5 L322.5 289.1 L323.0 294.9 L323.5 302.2 L324.0 312.5 L324.5 323.6 L325.0 332.7 L325.5 340.7 L326.0 346.3 L326.5 349.2 L327.0 350.3 L327.5 348.2 L328.0 343.4 L328.5 336.8 L329.0 329.1 L329.5 317.1 L330.0 306.8 L330.5 298.6 L331.0 291.3 L331.5 287.2 L332.0 284.8 L332.5 285.3 L333.0 288.8 L333.5 294.5 L334.0 301.6 L334.5 311.7 L335.0 322.9 L335.5 332.2 L336.0 340.2 L336.5 346.0 L337.0 349.0 L337.5 350.3 L338.0 348.4 L338.5 343.8 L339.0 337.3 L339.5 329.7 L340.0 317.9 L340.5 307.5 L341.0 299.2 L341.5 291.7 L342.0 287.4 L342.5 284.9 L343.0 285.2 L343.5 288.5 L344.0 294.0 L344.5 301.1 L345.0 310.8 L345.5 322.2 L346.0 331.7 L346.5 339.7 L347.0 345.7 L347.5 348.8 L348.0 350.3 L348.5 348.6 L349.0 344.2 L349.5 337.8 L350.0 330.3 L350.5 318.6 L351.0 308.1 L351.5 299.7 L352.0 292.1 L352.5 287.6 L353.0 285.0 L353.5 285.1 L354.0 288.2 L354.5 293.6 L355.0 300.6 L355.5 310.0 L356.0 321.5 L356.5 331.1 L357.0 339.2 L357.5 345.4 L358.0 348.6 L358.5 350.4 L359.0 348.8 L359.5 344.5 L360.0 338.3 L360.5 330.8 L361.0 319.4 L361.5 308.7 L362.0 300.2 L362.5 292.5 L363.0 287.8 L363.5 285.2 L364.0 285.0 L364.5 287.9 L365.0 293.2 L365.5 300.1 L366.0 309.2 L366.5 320.8 L367.0 330.5 L367.5 338.6 L368.0 345.1 L368.5 348.3 L369.0 350.3 L369.5 349.0 L370.0 344.9 L370.5 338.7 L371.0 331.3 L371.5 320.2 L372.0 309.4 L372.5 300.7 L373.0 292.9 L373.5 288.0 L374.0 285.3 L374.5 284.9 L375.0 287.6 L375.5 292.8 L376.0 299.6 L376.5 308.4 L377.0 320.1 L377.5 330.0 L378.0 338.1 L378.5 344.8 L379.0 348.2 L379.5 350.3 L380.0 349.2 L380.5 345.2 L381.0 339.2 L381.5 331.8 L382.0 321.0 L382.5 310.0 L383.0 301.2 L383.5 293.4 L384.0 288.2 L384.5 285.4 L385.0 284.8 L385.5 287.3 L386.0 292.4 L386.5 299.1 L387.0 307.6 L387.5 319.4 L388.0 329.4 L388.5 337.5 L389.0 344.5 L389.5 348.0 L390.0 350.3 L390.5 349.4 L391.0 345.6 L391.5 339.6 L392.0 332.3 L392.5 321.8 L393.0 310.7 L393.5 301.7 L394.0 293.8 L394.5 288.5 L395.0 285.6 L395.5 284.8 L396.0 287.1 L396.5 292.0 L397.0 298.6 L397.5 306.7 L398.0 318.6 L398.5 328.8 L399.0 336.9 L399.5 344.1 L400.0 347.9 L400.5 350.2 L401.0 349.5 L401.5 345.9 L402.0 340.1 L402.5 332.8 L403.0 322.5 L403.5 311.4 L404.0 302.3 L404.5 294.3 L405.0 288.7 L405.5 285.8 L406.0 284.7 L406.5 286.8 L407.0 291.6 L407.5 298.2 L408.0 305.9 L408.5 317.9 L409.0 328.2 L409.5 336.4 L410.0 343.7 L410.5 347.8 L411.0 350.2 L411.5 349.7 L412.0 346.2 L412.5 340.5 L413.0 333.4 L413.5 323.3 L414.0 312.1 L414.5 302.8 L415.0 294.8 L415.5 289.0 L416.0 286.0 L416.5 284.7 L417.0 286.6 L417.5 291.2 L418.0 297.7 L418.5 305.3 L419.0 317.1 L419.5 327.5 L420.0 335.8 L420.5 343.3 L421.0 347.6 L421.5 350.1 L422.0 349.8 L422.5 346.5 L423.0 341.0 L423.5 333.9 L424.0 324.2 L424.5 312.8 L425.0 303.3 L425.5 295.3 L426.0 289.3 L426.5 286.2 L427.0 284.7 L427.5 286.4 L428.0 290.8 L428.5 297.2 L429.0 304.7 L429.5 316.4 L430.0 326.9 L430.5 335.3 L431.0 342.9 L431.5 347.4 L432.0 350.0 L432.5 349.9 L433.0 346.8 L433.5 341.4 L434.0 334.4 L434.5 325.0 L435.0 313.5 L435.5 303.9 L436.0 295.8 L436.5 289.6 L437.0 286.4 L437.5 284.6 L438.0 286.2 L438.5 290.5 L439.0 296.7 L439.5 304.2 L440.0 315.6 L440.5 326.3 L441.0 334.8 L441.5 342.5 L442.0 347.2 L442.5 349.8 L443.0 350.0 L443.5 347.1 L444.0 341.8 L444.5 334.9 L445.0 325.8 L445.5 314.2 L446.0 304.5 L446.5 296.4 L447.0 289.9 L447.5 286.7 L448.0 284.7 L448.5 286.0 L449.0 290.1 L449.5 296.3 L450.0 303.7 L450.5 314.8 L451.0 325.6 L451.5 334.3 L452.0 342.1 L452.5 347.0 L453.0 349.7 L453.5 350.1 L454.0 347.4 L454.5 342.2 L455.0 335.4 L455.5 326.6 L456.0 314.9 L456.5 305.0 L457.0 296.9 L457.5 290.2 L458.0 286.8 L458.5 284.7 L459.0 285.8 L459.5 289.8 L460.0 295.8 L460.5 303.2 L461.0 314.0 L461.5 325.0 L462.0 333.8 L462.5 341.6 L463.0 346.8 L463.5 349.6 L464.0 350.2 L464.5 347.7 L465.0 342.6 L465.5 335.9 L466.0 327.4 L466.5 315.6 L467.0 305.6 L467.5 297.5 L468.0 290.5 L468.5 287.0 L469.0 284.7 L469.5 285.6 L470.0 289.4 L470.5 295.4 L471.0 302.7 L471.5 313.2 L472.0 324.3 L472.5 333.3 L473.0 341.2 L473.5 346.5 L474.0 349.4 L474.5 350.2 L475.0 347.9 L475.5 343.0 L476.0 336.4 L476.5 328.3 L477.0 316.4 L477.5 306.2 L478.0 298.1 L478.5 290.9 L479.0 287.1 L479.5 284.8 L480.0 285.5 L480.5 289.1 L481.0 294.9 L481.5 302.2 L482.0 312.5 L482.5 323.6 L483.0 332.7 L483.5 339.4 L484.0 343.3 L484.5 344.5 L485.0 343.3 L485.5 340.1 L486.0 335.3 L486.5 329.7 L487.0 323.7 L487.5 317.9 L488.0 312.7 L488.5 308.6 L489.0 305.7 L489.5 304.0 L490.0 303.7 L490.5 304.5 L491.0 306.2 L491.5 308.6 L492.0 311.4 L492.5 314.4 L493.0 317.2 L493.5 319.6 L494.0 321.6 L494.5 323.0 L495.0 323.7 L495.5 323.8 L496.0 323.4 L496.5 322.6 L497.0 321.4 L497.5 320.1 L498.0 318.7 L498.5 317.3 L499.0 316.2 L499.5 315.3 L500.0 314.7 L500.5 314.4 L501.0 314.4 L501.5 314.6 L502.0 315.0 L502.5 315.6 L503.0 316.3 L503.5 317.0 L504.0 317.6 L504.5 318.1 L505.0 318.6 L505.5 318.8 L506.0 319.0 L506.5 319.0 L507.0 318.8 L507.5 318.6 L508.0 318.3 L508.5 318.0 L509.0 317.7 L509.5 317.4 L510.0 317.1 L510.5 317.0 L511.0 316.8 L511.5 316.8 L512.0 316.8 L512.5 316.9 L513.0 317.0 L513.5 317.1 L514.0 317.3 L514.5 317.4 L515.0 317.6 L515.5 317.7 L516.0 317.8 L516.5 317.8 L518.0 317.8 L518.5 317.7 L519.0 317.7 L519.5 317.6 L520.0 317.5 L520.5 317.5 L521.0 317.4 L747.5 317.5 L748.0 320.2 L748.5 323.5 L749.0 325.6 L749.5 326.4 L750.0 326.1 L750.5 323.3 L751.0 317.7 L751.5 313.0 L752.0 308.4 L752.5 304.2 L753.0 301.7 L753.5 299.2 L754.0 299.0 L754.5 300.7 L755.0 303.9 L755.5 308.1 L756.0 316.3 L756.5 324.2 L757.0 330.4 L757.5 336.5 L758.0 340.3 L758.5 342.7 L759.0 343.2 L759.5 341.2 L760.0 337.2 L760.5 331.7 L761.0 324.2 L761.5 314.1 L762.0 305.7 L762.5 298.7 L763.0 292.9 L763.5 290.1 L764.0 288.2 L764.5 289.3 L765.0 292.9 L765.5 298.5 L766.0 305.2 L766.5 315.5 L767.0 325.6 L767.5 333.6 L768.0 341.0 L768.5 345.5 L769.0 348.1 L769.5 348.4 L770.0 345.9 L770.5 340.9 L771.0 334.4 L771.5 326.0 L772.0 314.6 L772.5 305.1 L773.0 297.3 L773.5 290.8 L774.0 287.6 L774.5 285.5 L775.0 286.6 L775.5 290.5 L776.0 296.4 L776.5 303.6 L777.0 314.3 L777.5 325.1 L778.0 333.7 L778.5 341.5 L779.0 346.5 L779.5 349.2 L780.0 349.8 L780.5 347.3 L781.0 342.3 L781.5 335.6 L782.0 327.2 L782.5 315.5 L783.0 305.6 L783.5 297.5 L784.0 290.6 L784.5 287.1 L785.0 284.9 L785.5 285.8 L786.0 289.6 L786.5 295.5 L787.0 302.8 L787.5 313.3 L788.0 324.3 L788.5 333.3 L789.0 341.2 L789.5 346.5 L790.0 349.3 L790.5 350.2 L791.0 347.8 L791.5 342.9 L792.0 336.3 L792.5 328.2 L793.0 316.3 L793.5 306.2 L794.0 298.0 L794.5 290.9 L795.0 287.1 L795.5 284.8 L796.0 285.5 L796.5 289.1 L797.0 294.9 L797.5 302.2 L798.0 312.5 L798.5 323.6 L799.0 332.8 L799.5 340.7 L800.0 346.3 L800.5 349.2 L801.0 350.3 L801.5 348.1 L802.0 343.4 L802.5 336.8 L803.0 329.1 L803.5 317.1 L804.0 306.8 L804.5 298.6 L805.0 291.3 L805.5 287.3 L806.0 284.9 L806.5 285.3 L807.0 288.8 L807.5 294.5 L808.0 301.7 L808.5 311.7 L809.0 322.9 L809.5 332.2 L810.0 340.2 L810.5 346.0 L811.0 349.0 L811.5 350.3 L812.0 348.4 L812.5 343.8 L813.0 337.3 L813.5 329.7 L814.0 317.9 L814.5 307.5 L815.0 299.2 L815.5 291.7 L816.0 287.4 L816.5 284.9 L817.0 285.2 L817.5 288.5 L818.0 294.0 L818.5 301.1 L819.0 310.8 L819.5 322.2 L820.0 331.7 L820.5 339.7 L821.0 345.7 L821.5 348.8 L822.0 350.3 L822.5 348.6 L823.0 344.2 L823.5 337.8 L824.0 330.3 L824.5 318.6 L825.0 308.1 L825.5 299.7 L826.0 292.1 L826.5 287.6 L827.0 285.0 L827.5 285.1 L828.0 288.2 L828.5 293.6 L829.0 300.6 L829.5 310.0 L830.0 321.5 L830.5 331.1 L831.0 339.2 L831.5 345.4 L832.0 348.6 L832.5 350.4 L833.0 348.8 L833.5 344.5 L834.0 338.3 L834.5 330.8 L835.0 319.4 L835.5 308.7 L836.0 300.2 L836.5 292.5 L837.0 287.8 L837.5 285.2 L838.0 285.0 L838.5 287.9 L839.0 293.2 L839.5 300.1 L840.0 309.2 L840.5 320.8 L841.0 330.5 L841.5 338.6 L842.0 345.1 L842.5 348.3 L843.0 350.3 L843.5 349.0 L844.0 344.9 L844.5 338.7 L845.0 331.3 L845.5 320.2 L846.0 309.4 L846.5 300.7 L847.0 292.9 L847.5 288.0 L848.0 285.3 L848.5 284.9 L849.0 287.6 L849.5 292.8 L850.0 299.6 L850.5 308.4 L851.0 320.1 L851.5 330.0 L852.0 338.1 L852.5 344.8 L853.0 348.2 L853.5 350.3 L854.0 349.2 L854.5 345.2 L855.0 339.2 L855.5 331.8 L856.0 321.0 L856.5 310.0 L857.0 301.2 L857.5 293.4 L858.0 288.2 L858.5 285.4 L859.0 284.8 L859.5 287.3 L860.0 292.4 L860.5 299.1 L861.0 307.6 L861.5 319.4 L862.0 329.4 L862.5 337.5 L863.0 344.5 L863.5 348.0 L864.0 350.3 L864.5 349.4 L865.0 345.6 L865.5 339.6 L866.0 332.3 L866.5 321.8 L867.0 310.7 L867.5 301.7 L868.0 293.8 L868.5 288.5 L869.0 285.6 L869.5 284.8 L870.0 287.1 L870.5 292.0 L871.0 298.6 L871.5 306.7 L872.0 318.6 L872.5 328.8 L873.0 336.9 L873.5 344.1 L874.0 347.9 L874.5 350.2 L875.0 349.5 L875.5 345.9 L876.0 340.1 L876.5 332.8 L877.0 322.5 L877.5 311.4 L878.0 302.3 L878.5 294.3 L879.0 288.7 L879.5 285.8 L880.0 284.7 L880.5 286.8 L881.0 291.6 L881.5 298.2 L882.0 305.9 L882.5 317.9 L883.0 328.2 L883.5 336.4 L884.0 343.7 L884.5 347.8 L885.0 350.2 L885.5 349.7 L886.0 346.2 L886.5 340.5 L887.0 333.4 L887.5 323.3 L888.0 312.1 L888.5 302.8 L889.0 294.8 L889.5 289.0 L890.0 286.0 L890.5 284.7 L891.0 286.6 L891.5 291.2 L892.0 297.7 L892.5 305.3 L893.0 317.1 L893.5 327.5 L894.0 335.8 L894.5 343.3 L895.0 347.6 L895.5 350.1 L896.0 349.8 L896.5 346.5 L897.0 341.0 L897.5 333.9 L898.0 324.2 L898.5 312.8 L899.0 303.3 L899.5 295.3 L900.0 289.3 L900.5 286.2 L901.0 284.7 L901.5 286.4 L902.0 290.8 L902.5 297.2 L903.0 304.7 L903.5 316.4 L904.0 326.9 L904.5 335.3 L905.0 342.9 L905.5 347.4 L906.0 350.0 L906.5 349.9 L907.0 346.8 L907.5 341.4 L908.0 334.4 L908.5 325.0 L909.0 313.5 L909.5 303.9 L910.0 295.8 L910.5 289.6 L911.0 286.4 L911.5 284.6 L912.0 286.2 L912.5 290.5 L913.0 296.7 L913.5 304.2 L914.0 315.6 L914.5 326.3 L915.0 334.8 L915.5 342.5 L916.0 347.2 L916.5 349.8 L917.0 350.0 L917.5 347.1 L918.0 341.8 L918.5 334.9 L919.0 325.8 L919.5 314.2 L920.0 304.5 L920.5 296.4 L921.0 289.9 L921.5 286.7 L922.0 284.7 L922.5 286.0 L923.0 290.1 L923.5 296.3 L924.0 303.7 L924.5 314.8 L925.0 325.6 L925.5 334.3 L926.0 342.1 L926.5 347.0 L927.0 349.7 L927.5 350.1 L928.0 347.4 L928.5 342.2 L929.0 335.4 L929.5 326.6 L930.0 314.9 L930.5 305.0 L931.0 296.9 L931.5 290.2 L932.0 286.8 L932.5 284.7 L933.0 285.8 L933.5 289.8 L934.0 295.8 L934.5 303.2 L935.0 314.0 L935.5 325.0 L936.0 333.8 L936.5 341.6 L937.0 346.8 L937.5 349.6 L938.0 350.2 L938.5 347.7 L939.0 342.6 L939.5 335.9 L940.0 327.4 L940.5 315.6 L941.0 305.6 L941.5 297.5 L942.0 290.5 L942.5 287.0 L943.0 284.7 L943.5 285.6 L944.0 289.4 L944.5 295.4 L945.0 302.7 L945.5 313.2 L946.0 324.3 L946.5 333.3 L947.0 341.2 L947.5 346.5 L948.0 349.4 L948.5 350.2 L949.0 347.9 L949.5 343.0 L950.0 336.4 L950.5 328.3 L951.0 316.4 L951.5 306.2 L952.0 298.1 L952.5 290.9 L953.0 287.1 L953.5 284.8 L954.0 285.5 L954.5 289.1 L955.0 294.9 L955.5 302.2 L956.0 312.5 L956.5 323.6 L957.0 332.7 L957.5 340.7 L958.0 346.3 L958.5 349.2 L959.0 350.3 L959.5 348.2 L960.0 343.4 L960.5 336.8 L961.0 329.1 L961.5 317.1 L962.0 306.8 L962.5 298.6 L963.0 291.3 L963.5 287.2 L964.0 284.8 L964.5 285.3 L965.0 288.8 L965.5 294.5 L966.0 301.6 L966.5 311.7 L967.0 322.9 L967.5 332.2 L968.0 340.2 L968.5 346.0 L969.0 349.0 L969.5 350.3 L970.0 348.4 L970.5 343.8 L971.0 337.3 L971.5 329.7 L972.0 317.9 L972.5 307.5 L973.0 299.2 L973.5 291.7 L974.0 287.4 L974.5 284.9 L975.0 285.2 L975.5 288.5 L976.0 294.0 L976.5 301.1 L977.0 310.8 L977.5 322.2 L978.0 331.7 L978.5 339.7 L979.0 345.7 L979.5 348.8 L980.0 350.3 L980.5 348.6 L981.0 344.2 L981.5 337.8 L982.0 330.3 L982.5 318.6 L983.0 308.1 L983.5 299.7 L984.0 292.1 L984.5 287.6 L985.0 285.0 L985.5 285.1 L986.0 288.2 L986.5 293.6 L987.0 300.6 L987.5 310.0 L988.0 321.5 L988.5 331.1 L989.0 339.2 L989.5 345.4 L990.0 348.6 L990.5 350.4 L991.0 348.8 L991.5 344.5 L992.0 338.3 L992.5 330.8 L993.0 319.4 L993.5 308.7 L994.0 300.2 L994.5 292.5 L995.0 287.8 L995.5 285.2 L996.0 285.0 L996.5 287.9 L997.0 293.2 L997.5 300.1 L998.0 309.2 L998.5 320.8 L999.0 330.5 L999.5 338.6 L1000.0 345.1 L1000.5 348.3" fill="none" stroke="#0000ff" stroke-width="1" shape-rendering="crispEdges"/>
<path d="M52.5 428.5 L221.0 428.5 L221.5 428.3 L222.0 427.7 L222.5 427.0 L223.0 426.5 L223.5 426.3 L224.0 426.7 L224.5 427.8 L225.0 429.5 L225.5 431.3 L226.0 433.1 L226.5 434.4 L227.0 435.3 L227.5 435.3 L228.0 434.5 L228.5 432.8 L229.0 430.3 L229.5 427.1 L230.0 423.5 L230.5 420.0 L231.0 417.2 L231.5 415.4 L232.0 414.8 L232.5 415.6 L233.0 417.8 L233.5 421.2 L234.0 425.6 L234.5 430.6 L235.0 436.0 L235.5 441.0 L236.0 445.1 L236.5 447.7 L237.0 448.6 L237.5 447.6 L238.0 444.8 L238.5 440.4 L239.0 434.7 L239.5 428.3 L240.0 421.5 L240.5 415.0 L241.0 409.5 L241.5 405.6 L242.0 403.8 L242.5 404.3 L243.0 406.8 L243.5 411.5 L244.0 417.7 L244.5 425.0 L245.0 432.7 L245.5 440.4 L246.0 447.3 L246.5 452.5 L247.0 455.6 L247.5 456.2 L248.0 454.5 L248.5 450.4 L249.0 444.3 L249.5 436.8 L250.0 428.5 L250.5 420.1 L251.0 412.1 L251.5 405.5 L252.0 401.0 L252.5 398.9 L253.0 399.5 L253.5 402.6 L254.0 408.0 L254.5 415.3 L255.0 423.7 L255.5 432.5 L256.0 441.2 L256.5 448.9 L257.0 454.8 L257.5 458.4 L258.0 459.2 L258.5 457.3 L259.0 453.0 L259.5 446.4 L260.0 438.3 L260.5 429.4 L261.0 420.3 L261.5 411.7 L262.0 404.6 L262.5 399.7 L263.0 397.3 L263.5 397.8 L264.0 400.9 L264.5 406.4 L265.0 413.9 L265.5 422.6 L266.0 431.7 L266.5 440.9 L267.0 449.0 L267.5 455.2 L268.0 459.1 L268.5 460.2 L269.0 458.4 L269.5 454.1 L270.0 447.6 L270.5 439.4 L271.0 430.3 L271.5 421.0 L272.0 412.1 L272.5 404.7 L273.0 399.5 L273.5 396.9 L274.0 397.1 L274.5 400.1 L275.0 405.5 L275.5 413.0 L276.0 421.7 L276.5 431.0 L277.0 440.3 L277.5 448.6 L278.0 455.0 L278.5 459.1 L279.0 460.4 L279.5 458.9 L280.0 454.8 L280.5 448.3 L281.0 440.1 L281.5 431.0 L282.0 421.7 L282.5 412.7 L283.0 405.1 L283.5 399.7 L284.0 396.8 L284.5 396.9 L285.0 399.7 L285.5 405.0 L286.0 412.3 L286.5 421.0 L287.0 430.3 L287.5 439.6 L288.0 448.1 L288.5 454.7 L289.0 459.0 L289.5 460.5 L290.0 459.2 L290.5 455.2 L291.0 448.9 L291.5 440.8 L292.0 431.7 L292.5 422.3 L293.0 413.3 L293.5 405.6 L294.0 400.0 L294.5 396.9 L295.0 396.8 L295.5 399.4 L296.0 404.5 L296.5 411.7 L297.0 420.4 L297.5 429.7 L298.0 439.0 L298.5 447.6 L299.0 454.3 L299.5 458.8 L300.0 460.5 L300.5 459.4 L301.0 455.5 L301.5 449.4 L302.0 441.4 L302.5 432.3 L303.0 422.9 L303.5 413.8 L304.0 406.0 L304.5 400.3 L305.0 397.0 L305.5 396.7 L306.0 399.1 L306.5 404.1 L307.0 411.2 L307.5 419.8 L308.0 429.0 L308.5 438.4 L309.0 447.0 L309.5 454.0 L310.0 458.6 L310.5 460.5 L311.0 459.5 L311.5 455.9 L312.0 449.8 L312.5 441.9 L313.0 432.9 L313.5 423.6 L314.0 414.4 L314.5 406.5 L315.0 400.6 L315.5 397.1 L316.0 396.6 L316.5 398.8 L317.0 403.7 L317.5 410.7 L318.0 419.2 L318.5 428.4 L319.0 437.8 L319.5 446.5 L320.0 453.6 L320.5 458.4 L321.0 460.5 L321.5 459.7 L322.0 456.2 L322.5 450.3 L323.0 442.5 L323.5 433.6 L324.0 424.2 L324.5 415.0 L325.0 406.9 L325.5 400.9 L326.0 397.3 L326.5 396.6 L327.0 398.6 L327.5 403.3 L328.0 410.1 L328.5 418.6 L329.0 427.8 L329.5 437.2 L330.0 446.0 L330.5 453.2 L331.0 458.1 L331.5 460.4 L332.0 459.8 L332.5 456.5 L333.0 450.8 L333.5 443.1 L334.0 434.2 L334.5 424.8 L335.0 415.6 L335.5 407.4 L336.0 401.2 L336.5 397.4 L337.0 396.5 L337.5 398.4 L338.0 402.9 L338.5 409.6 L339.0 418.0 L339.5 427.2 L340.0 436.6 L340.5 445.4 L341.0 452.7 L341.5 457.9 L342.0 460.4 L342.5 459.9 L343.0 456.8 L343.5 451.2 L344.0 443.6 L344.5 434.8 L345.0 425.5 L345.5 416.2 L346.0 407.9 L346.5 401.6 L347.0 397.6 L347.5 396.5 L348.0 398.2 L348.5 402.5 L349.0 409.1 L349.5 417.4 L350.0 426.5 L350.5 435.9 L351.0 444.9 L351.5 452.3 L352.0 457.6 L352.5 460.3 L353.0 460.1 L353.5 457.1 L354.0 451.7 L354.5 444.2 L355.0 435.4 L355.5 426.1 L356.0 416.8 L356.5 408.4 L357.0 401.9 L357.5 397.8 L358.0 396.5 L358.5 398.0 L359.0 402.1 L359.5 408.6 L360.0 416.8 L360.5 425.9 L361.0 435.3 L361.5 444.3 L362.0 451.9 L362.5 457.3 L363.0 460.2 L363.5 460.2 L364.0 457.4 L364.5 452.1 L365.0 444.7 L365.5 436.0 L366.0 426.7 L366.5 417.4 L367.0 408.9 L367.5 402.3 L368.0 398.0 L368.5 396.5 L369.0 397.8 L369.5 401.8 L370.0 408.1 L370.5 416.2 L371.0 425.3 L371.5 434.7 L372.0 443.7 L372.5 451.4 L373.0 457.0 L373.5 460.1 L374.0 460.3 L374.5 457.7 L375.0 452.5 L375.5 445.3 L376.0 436.6 L376.5 427.4 L377.0 418.0 L377.5 409.4 L378.0 402.7 L378.5 398.2 L379.0 396.5 L379.5 397.6 L380.0 401.4 L380.5 407.6 L381.0 415.6 L381.5 424.7 L382.0 434.1 L382.5 443.2 L383.0 451.0 L383.5 456.7 L384.0 460.0 L384.5 460.3 L385.0 457.9 L385.5 452.9 L386.0 445.8 L386.5 437.2 L387.0 428.0 L387.5 418.6 L388.0 410.0 L388.5 403.0 L389.0 398.4 L389.5 396.5 L390.0 397.5 L390.5 401.1 L391.0 407.2 L391.5 415.1 L392.0 424.1 L392.5 433.4 L393.0 442.6 L393.5 450.5 L394.0 456.4 L394.5 459.9 L395.0 460.4 L395.5 458.2 L396.0 453.3 L396.5 446.3 L397.0 437.8 L397.5 428.6 L398.0 419.2 L398.5 410.5 L399.0 403.4 L399.5 398.6 L400.0 396.5 L400.5 397.3 L401.0 400.8 L401.5 406.7 L402.0 414.5 L402.5 423.4 L403.0 432.8 L403.5 442.0 L404.0 450.1 L404.5 456.1 L405.0 459.7 L405.5 460.4 L406.0 458.4 L406.5 453.7 L407.0 446.9 L407.5 438.4 L408.0 429.2 L408.5 419.8 L409.0 411.0 L409.5 403.8 L410.0 398.9 L410.5 396.6 L411.0 397.2 L411.5 400.5 L412.0 406.2 L412.5 413.9 L413.0 422.8 L413.5 432.2 L414.0 441.4 L414.5 449.6 L415.0 455.8 L415.5 459.6 L416.0 460.5 L416.5 458.6 L417.0 454.1 L417.5 447.4 L418.0 439.0 L418.5 429.8 L419.0 420.4 L419.5 411.6 L420.0 404.3 L420.5 399.1 L421.0 396.6 L421.5 397.1 L422.0 400.2 L422.5 405.8 L423.0 413.4 L423.5 422.2 L424.0 431.5 L424.5 440.8 L425.0 449.1 L425.5 455.4 L426.0 459.4 L426.5 460.5 L427.0 458.8 L427.5 454.5 L428.0 447.9 L428.5 439.6 L429.0 430.5 L429.5 421.1 L430.0 412.1 L430.5 404.7 L431.0 399.4 L431.5 396.7 L432.0 396.9 L432.5 399.9 L433.0 405.3 L433.5 412.8 L434.0 421.6 L434.5 430.9 L435.0 440.2 L435.5 448.6 L436.0 455.1 L436.5 459.2 L437.0 460.5 L437.5 459.0 L438.0 454.9 L438.5 448.4 L439.0 440.2 L439.5 431.1 L440.0 421.7 L440.5 412.7 L441.0 405.1 L441.5 399.7 L442.0 396.8 L442.5 396.8 L443.0 399.6 L443.5 404.9 L444.0 412.3 L444.5 421.0 L445.0 430.3 L445.5 439.6 L446.0 448.1 L446.5 454.7 L447.0 459.0 L447.5 460.5 L448.0 459.2 L448.5 455.2 L449.0 448.9 L449.5 440.8 L450.0 431.7 L450.5 422.3 L451.0 413.3 L451.5 405.6 L452.0 400.0 L452.5 396.9 L453.0 396.7 L453.5 399.3 L454.0 404.5 L454.5 411.7 L455.0 420.4 L455.5 429.6 L456.0 439.0 L456.5 447.6 L457.0 454.3 L457.5 458.8 L458.0 460.5 L458.5 459.4 L459.0 455.6 L459.5 449.4 L460.0 441.4 L460.5 432.3 L461.0 422.9 L461.5 413.8 L462.0 406.0 L462.5 400.3 L463.0 397.0 L463.5 396.7 L464.0 399.1 L464.5 404.1 L465.0 411.2 L465.5 419.8 L466.0 429.0 L466.5 438.4 L467.0 447.0 L467.5 454.0 L468.0 458.6 L468.5 460.5 L469.0 459.5 L469.5 455.9 L470.0 449.8 L470.5 441.9 L471.0 432.9 L471.5 423.6 L472.0 414.4 L472.5 406.5 L473.0 400.6 L473.5 397.1 L474.0 396.6 L474.5 398.8 L475.0 403.7 L475.5 410.7 L476.0 419.2 L476.5 428.4 L477.0 437.8 L477.5 446.5 L478.0 453.6 L478.5 458.4 L479.0 460.5 L479.5 459.7 L480.0 456.2 L480.5 450.3 L481.0 442.5 L481.5 433.6 L482.0 424.2 L482.5 415.0 L483.0 406.9 L483.5 400.9 L484.0 397.6 L484.5 397.2 L485.0 399.8 L485.5 404.9 L486.0 412.0 L486.5 420.4 L487.0 429.2 L487.5 437.6 L488.0 444.8 L488.5 450.2 L489.0 453.4 L489.5 454.4 L490.0 453.0 L490.5 449.6 L491.0 444.6 L491.5 438.5 L492.0 432.0 L492.5 425.6 L493.0 419.9 L493.5 415.3 L494.0 412.1 L494.5 410.6 L495.0 410.6 L495.5 412.2 L496.0 414.9 L496.5 418.6 L497.0 422.8 L497.5 427.1 L498.0 431.2 L498.5 434.8 L499.0 437.5 L499.5 439.2 L500.0 439.9 L500.5 439.6 L501.0 438.4 L501.5 436.5 L502.0 434.1 L502.5 431.5 L503.0 428.8 L503.5 426.4 L504.0 424.4 L504.5 422.9 L505.0 422.0 L505.5 421.7 L506.0 422.0 L506.5 422.8 L507.0 424.0 L507.5 425.5 L508.0 427.0 L508.5 428.5 L509.0 429.9 L509.5 431.0 L510.0 431.8 L510.5 432.3 L511.0 432.4 L511.5 432.2 L512.0 431.7 L512.5 430.9 L513.0 430.1 L513.5 429.2 L514.0 428.4 L514.5 427.6 L515.0 427.0 L515.5 426.6 L516.0 426.4 L516.5 426.3 L517.0 426.5 L517.5 426.8 L518.0 427.2 L518.5 427.7 L519.0 428.2 L519.5 428.6 L520.0 429.1 L520.5 429.4 L521.0 429.6 L521.5 429.7 L522.0 429.7 L522.5 429.6 L523.0 429.4 L523.5 429.2 L524.0 428.9 L524.5 428.6 L525.0 428.4 L525.5 428.2 L526.0 428.0 L526.5 427.9 L527.5 427.9 L528.0 427.9 L528.5 428.0 L529.0 428.2 L529.5 428.3 L530.0 428.4 L530.5 428.6 L531.0 428.7 L531.5 428.8 L532.0 428.8 L533.5 428.8 L534.0 428.7 L534.5 428.7 L535.0 428.6 L535.5 428.5 L536.0 428.5 L536.5 428.4 L747.5 428.5 L748.0 428.4 L748.5 427.9 L749.0 427.2 L749.5 426.6 L750.0 426.3 L750.5 426.5 L751.0 427.4 L751.5 428.9 L752.0 430.7 L752.5 432.5 L753.0 434.0 L753.5 435.1 L754.0 435.4 L754.5 434.9 L755.0 433.4 L755.5 431.2 L756.0 428.2 L756.5 424.7 L757.0 421.1 L757.5 418.1 L758.0 415.8 L758.5 414.9 L759.0 415.2 L759.5 416.9 L760.0 419.9 L760.5 424.1 L761.0 428.9 L761.5 434.2 L762.0 439.4 L762.5 443.9 L763.0 447.0 L763.5 448.5 L764.0 448.1 L764.5 446.0 L765.0 442.0 L765.5 436.7 L766.0 430.5 L766.5 423.8 L767.0 417.1 L767.5 411.1 L768.0 406.7 L768.5 404.2 L769.0 403.9 L769.5 405.8 L770.0 409.7 L770.5 415.5 L771.0 422.5 L771.5 430.1 L772.0 437.9 L772.5 445.1 L773.0 450.9 L773.5 454.8 L774.0 456.3 L774.5 455.3 L775.0 452.0 L775.5 446.5 L776.0 439.4 L776.5 431.3 L777.0 422.9 L777.5 414.6 L778.0 407.5 L778.5 402.2 L779.0 399.3 L779.5 399.0 L780.0 401.3 L780.5 406.0 L781.0 412.7 L781.5 420.8 L782.0 429.5 L782.5 438.4 L783.0 446.5 L783.5 453.1 L784.0 457.5 L784.5 459.2 L785.0 458.2 L785.5 454.7 L786.0 448.8 L786.5 441.2 L787.0 432.4 L787.5 423.4 L788.0 414.5 L788.5 406.8 L789.0 401.1 L789.5 397.8 L790.0 397.3 L790.5 399.5 L791.0 404.3 L791.5 411.2 L792.0 419.6 L792.5 428.7 L793.0 437.9 L793.5 446.5 L794.0 453.4 L794.5 458.1 L795.0 460.1 L795.5 459.3 L796.0 455.8 L796.5 450.0 L797.0 442.2 L797.5 433.4 L798.0 424.1 L798.5 415.0 L799.0 407.0 L799.5 401.0 L800.0 397.4 L800.5 396.7 L801.0 398.8 L801.5 403.5 L802.0 410.3 L802.5 418.7 L803.0 427.9 L803.5 437.2 L804.0 446.0 L804.5 453.1 L805.0 458.1 L805.5 460.3 L806.0 459.7 L806.5 456.4 L807.0 450.7 L807.5 443.0 L808.0 434.1 L808.5 424.8 L809.0 415.6 L809.5 407.4 L810.0 401.2 L810.5 397.5 L811.0 396.6 L811.5 398.4 L812.0 402.9 L812.5 409.7 L813.0 418.0 L813.5 427.2 L814.0 436.6 L814.5 445.4 L815.0 452.7 L815.5 457.9 L816.0 460.3 L816.5 459.9 L817.0 456.8 L817.5 451.2 L818.0 443.6 L818.5 434.8 L819.0 425.4 L819.5 416.2 L820.0 407.9 L820.5 401.6 L821.0 397.6 L821.5 396.5 L822.0 398.2 L822.5 402.5 L823.0 409.1 L823.5 417.4 L824.0 426.5 L824.5 435.9 L825.0 444.9 L825.5 452.3 L826.0 457.6 L826.5 460.3 L827.0 460.1 L827.5 457.1 L828.0 451.7 L828.5 444.2 L829.0 435.4 L829.5 426.1 L830.0 416.8 L830.5 408.4 L831.0 401.9 L831.5 397.8 L832.0 396.5 L832.5 398.0 L833.0 402.1 L833.5 408.6 L834.0 416.8 L834.5 425.9 L835.0 435.3 L835.5 444.3 L836.0 451.9 L836.5 457.3 L837.0 460.2 L837.5 460.2 L838.0 457.4 L838.5 452.1 L839.0 444.7 L839.5 436.0 L840.0 426.7 L840.5 417.4 L841.0 408.9 L841.5 402.3 L842.0 398.0 L842.5 396.5 L843.0 397.8 L843.5 401.8 L844.0 408.1 L844.5 416.2 L845.0 425.3 L845.5 434.7 L846.0 443.7 L846.5 451.4 L847.0 457.0 L847.5 460.1 L848.0 460.3 L848.5 457.7 L849.0 452.5 L849.5 445.3 L850.0 436.6 L850.5 427.3 L851.0 418.0 L851.5 409.4 L852.0 402.7 L852.5 398.2 L853.0 396.5 L853.5 397.6 L854.0 401.4 L854.5 407.6 L855.0 415.6 L855.5 424.7 L856.0 434.1 L856.5 443.2 L857.0 451.0 L857.5 456.7 L858.0 460.0 L858.5 460.3 L859.0 457.9 L859.5 452.9 L860.0 445.8 L860.5 437.2 L861.0 428.0 L861.5 418.6 L862.0 410.0 L862.5 403.0 L863.0 398.4 L863.5 396.5 L864.0 397.5 L864.5 401.1 L865.0 407.2 L865.5 415.1 L866.0 424.1 L866.5 433.4 L867.0 442.6 L867.5 450.5 L868.0 456.4 L868.5 459.9 L869.0 460.4 L869.5 458.2 L870.0 453.3 L870.5 446.3 L871.0 437.8 L871.5 428.6 L872.0 419.2 L872.5 410.5 L873.0 403.4 L873.5 398.6 L874.0 396.5 L874.5 397.3 L875.0 400.8 L875.5 406.7 L876.0 414.5 L876.5 423.4 L877.0 432.8 L877.5 442.0 L878.0 450.1 L878.5 456.1 L879.0 459.7 L879.5 460.4 L880.0 458.4 L880.5 453.7 L881.0 446.9 L881.5 438.4 L882.0 429.2 L882.5 419.8 L883.0 411.0 L883.5 403.8 L884.0 398.9 L884.5 396.6 L885.0 397.2 L885.5 400.5 L886.0 406.2 L886.5 413.9 L887.0 422.8 L887.5 432.2 L888.0 441.4 L888.5 449.6 L889.0 455.8 L889.5 459.6 L890.0 460.5 L890.5 458.6 L891.0 454.1 L891.5 447.4 L892.0 439.0 L892.5 429.8 L893.0 420.4 L893.5 411.6 L894.0 404.3 L894.5 399.1 L895.0 396.6 L895.5 397.1 L896.0 400.2 L896.5 405.8 L897.0 413.4 L897.5 422.2 L898.0 431.5 L898.5 440.8 L899.0 449.1 L899.5 455.4 L900.0 459.4 L900.5 460.5 L901.0 458.8 L901.5 454.5 L902.0 447.9 L902.5 439.6 L903.0 430.5 L903.5 421.1 L904.0 412.1 L904.5 404.7 L905.0 399.4 L905.5 396.7 L906.0 396.9 L906.5 399.9 L907.0 405.3 L907.5 412.8 L908.0 421.6 L908.5 430.9 L909.0 440.2 L909.5 448.6 L910.0 455.1 L910.5 459.2 L911.0 460.5 L911.5 459.0 L912.0 454.9 L912.5 448.4 L913.0 440.2 L913.5 431.1 L914.0 421.7 L914.5 412.7 L915.0 405.1 L915.5 399.7 L916.0 396.8 L916.5 396.8 L917.0 399.6 L917.5 404.9 L918.0 412.3 L918.5 421.0 L919.0 430.3 L919.5 439.6 L920.0 448.1 L920.5 454.7 L921.0 459.0 L921.5 460.5 L922.0 459.2 L922.5 455.2 L923.0 448.9 L923.5 440.8 L924.0 431.7 L924.5 422.3 L925.0 413.3 L925.5 405.6 L926.0 400.0 L926.5 396.9 L927.0 396.7 L927.5 399.3 L928.0 404.5 L928.5 411.7 L929.0 420.4 L929.5 429.6 L930.0 439.0 L930.5 447.6 L931.0 454.3 L931.5 458.8 L932.0 460.5 L932.5 459.4 L933.0 455.6 L933.5 449.4 L934.0 441.4 L934.5 432.3 L935.0 422.9 L935.5 413.8 L936.0 406.0 L936.5 400.3 L937.0 397.0 L937.5 396.7 L938.0 399.1 L938.5 404.1 L939.0 411.2 L939.5 419.8 L940.0 429.0 L940.5 438.4 L941.0 447.0 L941.5 454.0 L942.0 458.6 L942.5 460.5 L943.0 459.5 L943.5 455.9 L944.0 449.8 L944.5 441.9 L945.0 432.9 L945.5 423.6 L946.0 414.4 L946.5 406.5 L947.0 400.6 L947.5 397.1 L948.0 396.6 L948.5 398.8 L949.0 403.7 L949.5 410.7 L950.0 419.2 L950.5 428.4 L951.0 437.8 L951.5 446.5 L952.0 453.6 L952.5 458.4 L953.0 460.5 L953.5 459.7 L954.0 456.2 L954.5 450.3 L955.0 442.5 L955.5 433.6 L956.0 424.2 L956.5 415.0 L957.0 406.9 L957.5 400.9 L958.0 397.3 L958.5 396.6 L959.0 398.6 L959.5 403.3 L960.0 410.1 L960.5 418.6 L961.0 427.8 L961.5 437.2 L962.0 446.0 L962.5 453.2 L963.0 458.1 L963.5 460.4 L964.0 459.8 L964.5 456.5 L965.0 450.8 L965.5 443.1 L966.0 434.2 L966.5 424.8 L967.0 415.6 L967.5 407.4 L968.0 401.2 L968.5 397.4 L969.0 396.5 L969.5 398.4 L970.0 402.9 L970.5 409.6 L971.0 418.0 L971.5 427.2 L972.0 436.6 L972.5 445.4 L973.0 452.7 L973.5 457.9 L974.0 460.4 L974.5 459.9 L975.0 456.8 L975.5 451.2 L976.0 443.6 L976.5 434.8 L977.0 425.5 L977.5 416.2 L978.0 407.9 L978.5 401.6 L979.0 397.6 L979.5 396.5 L980.0 398.2 L980.5 402.5 L981.0 409.1 L981.5 417.4 L982.0 426.5 L982.5 435.9 L983.0 444.9 L983.5 452.3 L984.0 457.6 L984.5 460.3 L985.0 460.1 L985.5 457.1 L986.0 451.7 L986.5 444.2 L987.0 435.4 L987.5 426.1 L988.0 416.8 L988.5 408.4 L989.0 401.9 L989.5 397.8 L990.0 396.5 L990.5 398.0 L991.0 402.1 L991.5 408.6 L992.0 416.8 L992.5 425.9 L993.0 435.3 L993.5 444.3 L994.0 451.9 L994.5 457.3 L995.0 460.2 L995.5 460.2 L996.0 457.4 L996.5 452.1 L997.0 444.7 L997.5 436.0 L998.0 426.7 L998.5 417.4 L999.0 408.9 L999.5 402.3 L1000.0 398.0 L1000.5 396.5" fill="none" stroke="#00ff00" stroke-width="1" shape-rendering="crispEdges"/>
</g>
</svg>
<div class="a" style="left:3px;top:510px;width:1023px;height:397px;background:#bcd2ea;"></div>
<div class="a" style="left:3px;top:510px;width:1px;height:397px;background:#000;"></div>
<div class="a" style="left:4px;top:510px;width:1px;height:396px;background:#fff;"></div>
<div class="a" style="left:1025px;top:510px;width:1px;height:397px;background:#000;"></div>
<div class="a" style="left:1024px;top:511px;width:1px;height:395px;background:#30d8f4;"></div>
<div class="a" style="left:4px;top:510px;width:1021px;height:1px;background:#3a3a3a;"></div>
<div class="a" style="left:4px;top:511px;width:1021px;height:1px;background:#fff;"></div>
<div class="a" style="left:5px;top:512px;width:1019px;height:29px;background:linear-gradient(#96b1ce,#b9d1ec);"></div>
<div class="t" style="left:33px;top:523px;font-size:12px;">D flipflop.asc</div>
<svg class="a" style="left:0;top:0" width="40" height="545" viewBox="0 0 40 545"><g transform="translate(1.5 429)"><path d="M13 99.5 H16.5 M18 97 L22.5 92.5 M18 102 L23.5 107.5" stroke="#0000ff" stroke-width="1.3" fill="none"/><rect x="16" y="95" width="2.2" height="9" fill="#0000ff"/><path d="M23.5 108 L19.8 106.8 L22.6 104 Z" fill="#0000ff" stroke="#0000ff" stroke-width="0.8"/></g></svg>
<div class="a" style="left:916px;top:520px;width:31px;height:18px;border:1px solid #6f85a3;border-radius:3px;box-sizing:border-box;background:linear-gradient(#dfe9f5 0,#c5d6ea 50%,#a9c0dc 51%,#bcd0e8 100%);"></div>
<div class="a" style="left:950px;top:520px;width:31px;height:18px;border:1px solid #6f85a3;border-radius:3px;box-sizing:border-box;background:linear-gradient(#dfe9f5 0,#c5d6ea 50%,#a9c0dc 51%,#bcd0e8 100%);"></div>
<div class="a" style="left:984px;top:520px;width:31px;height:18px;border:1px solid #6e2a22;border-radius:3px;box-sizing:border-box;background:linear-gradient(#e8a59a 0,#d47161 50%,#b8321f 51%,#c9563f 100%);"></div>
<svg class="a" style="left:0;top:0" width="1029" height="930" viewBox="0 0 1029 930"><rect x="926.5" y="528.5" width="10" height="3.5" rx="1" fill="#fff" stroke="#444" stroke-width="1"/><rect x="960.5" y="524.5" width="9.5" height="7.5" rx="1" fill="#fff" stroke="#444" stroke-width="1"/><rect x="963" y="527.0" width="4.5" height="2.5" fill="none" stroke="#444" stroke-width="1"/><path d="M996 525.5 L1003.5 531.5 M1003.5 525.5 L996 531.5" stroke="#4a4a4a" stroke-width="3.4" stroke-linecap="square"/><path d="M996 525.5 L1003.5 531.5 M1003.5 525.5 L996 531.5" stroke="#f4f4f4" stroke-width="1.5" stroke-linecap="square"/></svg>
<div class="a" style="left:11px;top:541px;width:1005px;height:1px;background:#a0a0a0;"></div>
<div class="a" style="left:11px;top:541px;width:1px;height:356px;background:#909090;"></div>
<div class="a" style="left:12px;top:542px;width:1004px;height:1px;background:#686868;"></div>
<div class="a" style="left:12px;top:542px;width:1px;height:355px;background:#686868;"></div>
<div class="a" style="left:13px;top:543px;width:1003px;height:354px;background:#c0c0c0;"></div>
<div class="a" style="left:13px;top:543px;width:1px;height:354px;background:#c8c8c8;"></div>
<div class="a" style="left:11px;top:897px;width:1007px;height:2px;background:#fff;"></div>
<div class="a" style="left:1016px;top:541px;width:2px;height:358px;background:#fff;"></div>
<div class="a" style="left:4px;top:904px;width:1020px;height:1px;background:#c8cce8;"></div>
<div class="a" style="left:4px;top:905px;width:1021px;height:1px;background:#30e0f0;"></div>
<div class="a" style="left:3px;top:906px;width:1023px;height:1px;background:#000;"></div>
<svg class="a" style="left:0;top:0" width="1029" height="930" viewBox="0 0 1029 930"><defs><clipPath id="sc"><rect x="14" y="543" width="1002" height="354"/></clipPath></defs><g clip-path="url(#sc)" shape-rendering="crispEdges"><path d="M17 551h1v1h-1zM33 551h1v1h-1zM49 551h1v1h-1zM65 551h1v1h-1zM81 551h1v1h-1zM97 551h1v1h-1zM113 551h1v1h-1zM129 551h1v1h-1zM145 551h1v1h-1zM161 551h1v1h-1zM177 551h1v1h-1zM193 551h1v1h-1zM209 551h1v1h-1zM225 551h1v1h-1zM241 551h1v1h-1zM257 551h1v1h-1zM273 551h1v1h-1zM289 551h1v1h-1zM305 551h1v1h-1zM321 551h1v1h-1zM337 551h1v1h-1zM353 551h1v1h-1zM369 551h1v1h-1zM385 551h1v1h-1zM401 551h1v1h-1zM417 551h1v1h-1zM433 551h1v1h-1zM449 551h1v1h-1zM465 551h1v1h-1zM481 551h1v1h-1zM498 551h1v1h-1zM514 551h1v1h-1zM530 551h1v1h-1zM546 551h1v1h-1zM562 551h1v1h-1zM578 551h1v1h-1zM594 551h1v1h-1zM610 551h1v1h-1zM626 551h1v1h-1zM642 551h1v1h-1zM658 551h1v1h-1zM674 551h1v1h-1zM690 551h1v1h-1zM706 551h1v1h-1zM722 551h1v1h-1zM738 551h1v1h-1zM754 551h1v1h-1zM770 551h1v1h-1zM786 551h1v1h-1zM802 551h1v1h-1zM818 551h1v1h-1zM834 551h1v1h-1zM850 551h1v1h-1zM866 551h1v1h-1zM882 551h1v1h-1zM898 551h1v1h-1zM914 551h1v1h-1zM930 551h1v1h-1zM946 551h1v1h-1zM962 551h1v1h-1zM978 551h1v1h-1zM994 551h1v1h-1zM1010 551h1v1h-1zM17 567h1v1h-1zM33 567h1v1h-1zM49 567h1v1h-1zM65 567h1v1h-1zM81 567h1v1h-1zM97 567h1v1h-1zM113 567h1v1h-1zM129 567h1v1h-1zM145 567h1v1h-1zM161 567h1v1h-1zM177 567h1v1h-1zM193 567h1v1h-1zM209 567h1v1h-1zM225 567h1v1h-1zM241 567h1v1h-1zM257 567h1v1h-1zM273 567h1v1h-1zM289 567h1v1h-1zM305 567h1v1h-1zM321 567h1v1h-1zM337 567h1v1h-1zM353 567h1v1h-1zM369 567h1v1h-1zM385 567h1v1h-1zM401 567h1v1h-1zM417 567h1v1h-1zM433 567h1v1h-1zM449 567h1v1h-1zM465 567h1v1h-1zM481 567h1v1h-1zM498 567h1v1h-1zM514 567h1v1h-1zM530 567h1v1h-1zM546 567h1v1h-1zM562 567h1v1h-1zM578 567h1v1h-1zM594 567h1v1h-1zM610 567h1v1h-1zM626 567h1v1h-1zM642 567h1v1h-1zM658 567h1v1h-1zM674 567h1v1h-1zM690 567h1v1h-1zM706 567h1v1h-1zM722 567h1v1h-1zM738 567h1v1h-1zM754 567h1v1h-1zM770 567h1v1h-1zM786 567h1v1h-1zM802 567h1v1h-1zM818 567h1v1h-1zM834 567h1v1h-1zM850 567h1v1h-1zM866 567h1v1h-1zM882 567h1v1h-1zM898 567h1v1h-1zM914 567h1v1h-1zM930 567h1v1h-1zM946 567h1v1h-1zM962 567h1v1h-1zM978 567h1v1h-1zM994 567h1v1h-1zM1010 567h1v1h-1zM17 583h1v1h-1zM33 583h1v1h-1zM49 583h1v1h-1zM65 583h1v1h-1zM81 583h1v1h-1zM97 583h1v1h-1zM113 583h1v1h-1zM129 583h1v1h-1zM145 583h1v1h-1zM161 583h1v1h-1zM177 583h1v1h-1zM193 583h1v1h-1zM209 583h1v1h-1zM225 583h1v1h-1zM241 583h1v1h-1zM257 583h1v1h-1zM273 583h1v1h-1zM289 583h1v1h-1zM305 583h1v1h-1zM321 583h1v1h-1zM337 583h1v1h-1zM353 583h1v1h-1zM369 583h1v1h-1zM385 583h1v1h-1zM401 583h1v1h-1zM417 583h1v1h-1zM433 583h1v1h-1zM449 583h1v1h-1zM465 583h1v1h-1zM481 583h1v1h-1zM498 583h1v1h-1zM514 583h1v1h-1zM530 583h1v1h-1zM546 583h1v1h-1zM562 583h1v1h-1zM578 583h1v1h-1zM594 583h1v1h-1zM610 583h1v1h-1zM626 583h1v1h-1zM642 583h1v1h-1zM658 583h1v1h-1zM674 583h1v1h-1zM690 583h1v1h-1zM706 583h1v1h-1zM722 583h1v1h-1zM738 583h1v1h-1zM754 583h1v1h-1zM770 583h1v1h-1zM786 583h1v1h-1zM802 583h1v1h-1zM818 583h1v1h-1zM834 583h1v1h-1zM850 583h1v1h-1zM866 583h1v1h-1zM882 583h1v1h-1zM898 583h1v1h-1zM914 583h1v1h-1zM930 583h1v1h-1zM946 583h1v1h-1zM962 583h1v1h-1zM978 583h1v1h-1zM994 583h1v1h-1zM1010 583h1v1h-1zM17 599h1v1h-1zM33 599h1v1h-1zM49 599h1v1h-1zM65 599h1v1h-1zM81 599h1v1h-1zM97 599h1v1h-1zM113 599h1v1h-1zM129 599h1v1h-1zM145 599h1v1h-1zM161 599h1v1h-1zM177 599h1v1h-1zM193 599h1v1h-1zM209 599h1v1h-1zM225 599h1v1h-1zM241 599h1v1h-1zM257 599h1v1h-1zM273 599h1v1h-1zM289 599h1v1h-1zM305 599h1v1h-1zM321 599h1v1h-1zM337 599h1v1h-1zM353 599h1v1h-1zM369 599h1v1h-1zM385 599h1v1h-1zM401 599h1v1h-1zM417 599h1v1h-1zM433 599h1v1h-1zM449 599h1v1h-1zM465 599h1v1h-1zM481 599h1v1h-1zM498 599h1v1h-1zM514 599h1v1h-1zM530 599h1v1h-1zM546 599h1v1h-1zM562 599h1v1h-1zM578 599h1v1h-1zM594 599h1v1h-1zM610 599h1v1h-1zM626 599h1v1h-1zM642 599h1v1h-1zM658 599h1v1h-1zM674 599h1v1h-1zM690 599h1v1h-1zM706 599h1v1h-1zM722 599h1v1h-1zM738 599h1v1h-1zM754 599h1v1h-1zM770 599h1v1h-1zM786 599h1v1h-1zM802 599h1v1h-1zM818 599h1v1h-1zM834 599h1v1h-1zM850 599h1v1h-1zM866 599h1v1h-1zM882 599h1v1h-1zM898 599h1v1h-1zM914 599h1v1h-1zM930 599h1v1h-1zM946 599h1v1h-1zM962 599h1v1h-1zM978 599h1v1h-1zM994 599h1v1h-1zM1010 599h1v1h-1zM17 615h1v1h-1zM33 615h1v1h-1zM49 615h1v1h-1zM65 615h1v1h-1zM81 615h1v1h-1zM97 615h1v1h-1zM113 615h1v1h-1zM129 615h1v1h-1zM145 615h1v1h-1zM161 615h1v1h-1zM177 615h1v1h-1zM193 615h1v1h-1zM209 615h1v1h-1zM225 615h1v1h-1zM241 615h1v1h-1zM257 615h1v1h-1zM273 615h1v1h-1zM289 615h1v1h-1zM305 615h1v1h-1zM321 615h1v1h-1zM337 615h1v1h-1zM353 615h1v1h-1zM369 615h1v1h-1zM385 615h1v1h-1zM401 615h1v1h-1zM417 615h1v1h-1zM433 615h1v1h-1zM449 615h1v1h-1zM465 615h1v1h-1zM481 615h1v1h-1zM498 615h1v1h-1zM514 615h1v1h-1zM530 615h1v1h-1zM546 615h1v1h-1zM562 615h1v1h-1zM578 615h1v1h-1zM594 615h1v1h-1zM610 615h1v1h-1zM626 615h1v1h-1zM642 615h1v1h-1zM658 615h1v1h-1zM674 615h1v1h-1zM690 615h1v1h-1zM706 615h1v1h-1zM722 615h1v1h-1zM738 615h1v1h-1zM754 615h1v1h-1zM770 615h1v1h-1zM786 615h1v1h-1zM802 615h1v1h-1zM818 615h1v1h-1zM834 615h1v1h-1zM850 615h1v1h-1zM866 615h1v1h-1zM882 615h1v1h-1zM898 615h1v1h-1zM914 615h1v1h-1zM930 615h1v1h-1zM946 615h1v1h-1zM962 615h1v1h-1zM978 615h1v1h-1zM994 615h1v1h-1zM1010 615h1v1h-1zM17 631h1v1h-1zM33 631h1v1h-1zM49 631h1v1h-1zM65 631h1v1h-1zM81 631h1v1h-1zM97 631h1v1h-1zM113 631h1v1h-1zM129 631h1v1h-1zM145 631h1v1h-1zM161 631h1v1h-1zM177 631h1v1h-1zM193 631h1v1h-1zM209 631h1v1h-1zM225 631h1v1h-1zM241 631h1v1h-1zM257 631h1v1h-1zM273 631h1v1h-1zM289 631h1v1h-1zM305 631h1v1h-1zM321 631h1v1h-1zM337 631h1v1h-1zM353 631h1v1h-1zM369 631h1v1h-1zM385 631h1v1h-1zM401 631h1v1h-1zM417 631h1v1h-1zM433 631h1v1h-1zM449 631h1v1h-1zM465 631h1v1h-1zM481 631h1v1h-1zM498 631h1v1h-1zM514 631h1v1h-1zM530 631h1v1h-1zM546 631h1v1h-1zM562 631h1v1h-1zM578 631h1v1h-1zM594 631h1v1h-1zM610 631h1v1h-1zM626 631h1v1h-1zM642 631h1v1h-1zM658 631h1v1h-1zM674 631h1v1h-1zM690 631h1v1h-1zM706 631h1v1h-1zM722 631h1v1h-1zM738 631h1v1h-1zM754 631h1v1h-1zM770 631h1v1h-1zM786 631h1v1h-1zM802 631h1v1h-1zM818 631h1v1h-1zM834 631h1v1h-1zM850 631h1v1h-1zM866 631h1v1h-1zM882 631h1v1h-1zM898 631h1v1h-1zM914 631h1v1h-1zM930 631h1v1h-1zM946 631h1v1h-1zM962 631h1v1h-1zM978 631h1v1h-1zM994 631h1v1h-1zM1010 631h1v1h-1zM17 647h1v1h-1zM33 647h1v1h-1zM49 647h1v1h-1zM65 647h1v1h-1zM81 647h1v1h-1zM97 647h1v1h-1zM113 647h1v1h-1zM129 647h1v1h-1zM145 647h1v1h-1zM161 647h1v1h-1zM177 647h1v1h-1zM193 647h1v1h-1zM209 647h1v1h-1zM225 647h1v1h-1zM241 647h1v1h-1zM257 647h1v1h-1zM273 647h1v1h-1zM289 647h1v1h-1zM305 647h1v1h-1zM321 647h1v1h-1zM337 647h1v1h-1zM353 647h1v1h-1zM369 647h1v1h-1zM385 647h1v1h-1zM401 647h1v1h-1zM417 647h1v1h-1zM433 647h1v1h-1zM449 647h1v1h-1zM465 647h1v1h-1zM481 647h1v1h-1zM498 647h1v1h-1zM514 647h1v1h-1zM530 647h1v1h-1zM546 647h1v1h-1zM562 647h1v1h-1zM578 647h1v1h-1zM594 647h1v1h-1zM610 647h1v1h-1zM626 647h1v1h-1zM642 647h1v1h-1zM658 647h1v1h-1zM674 647h1v1h-1zM690 647h1v1h-1zM706 647h1v1h-1zM722 647h1v1h-1zM738 647h1v1h-1zM754 647h1v1h-1zM770 647h1v1h-1zM786 647h1v1h-1zM802 647h1v1h-1zM818 647h1v1h-1zM834 647h1v1h-1zM850 647h1v1h-1zM866 647h1v1h-1zM882 647h1v1h-1zM898 647h1v1h-1zM914 647h1v1h-1zM930 647h1v1h-1zM946 647h1v1h-1zM962 647h1v1h-1zM978 647h1v1h-1zM994 647h1v1h-1zM1010 647h1v1h-1zM17 663h1v1h-1zM33 663h1v1h-1zM49 663h1v1h-1zM65 663h1v1h-1zM81 663h1v1h-1zM97 663h1v1h-1zM113 663h1v1h-1zM129 663h1v1h-1zM145 663h1v1h-1zM161 663h1v1h-1zM177 663h1v1h-1zM193 663h1v1h-1zM209 663h1v1h-1zM225 663h1v1h-1zM241 663h1v1h-1zM257 663h1v1h-1zM273 663h1v1h-1zM289 663h1v1h-1zM305 663h1v1h-1zM321 663h1v1h-1zM337 663h1v1h-1zM353 663h1v1h-1zM369 663h1v1h-1zM385 663h1v1h-1zM401 663h1v1h-1zM417 663h1v1h-1zM433 663h1v1h-1zM449 663h1v1h-1zM465 663h1v1h-1zM481 663h1v1h-1zM498 663h1v1h-1zM514 663h1v1h-1zM530 663h1v1h-1zM546 663h1v1h-1zM562 663h1v1h-1zM578 663h1v1h-1zM594 663h1v1h-1zM610 663h1v1h-1zM626 663h1v1h-1zM642 663h1v1h-1zM658 663h1v1h-1zM674 663h1v1h-1zM690 663h1v1h-1zM706 663h1v1h-1zM722 663h1v1h-1zM738 663h1v1h-1zM754 663h1v1h-1zM770 663h1v1h-1zM786 663h1v1h-1zM802 663h1v1h-1zM818 663h1v1h-1zM834 663h1v1h-1zM850 663h1v1h-1zM866 663h1v1h-1zM882 663h1v1h-1zM898 663h1v1h-1zM914 663h1v1h-1zM930 663h1v1h-1zM946 663h1v1h-1zM962 663h1v1h-1zM978 663h1v1h-1zM994 663h1v1h-1zM1010 663h1v1h-1zM17 679h1v1h-1zM33 679h1v1h-1zM49 679h1v1h-1zM65 679h1v1h-1zM81 679h1v1h-1zM97 679h1v1h-1zM113 679h1v1h-1zM129 679h1v1h-1zM145 679h1v1h-1zM161 679h1v1h-1zM177 679h1v1h-1zM193 679h1v1h-1zM209 679h1v1h-1zM225 679h1v1h-1zM241 679h1v1h-1zM257 679h1v1h-1zM273 679h1v1h-1zM289 679h1v1h-1zM305 679h1v1h-1zM321 679h1v1h-1zM337 679h1v1h-1zM353 679h1v1h-1zM369 679h1v1h-1zM385 679h1v1h-1zM401 679h1v1h-1zM417 679h1v1h-1zM433 679h1v1h-1zM449 679h1v1h-1zM465 679h1v1h-1zM481 679h1v1h-1zM498 679h1v1h-1zM514 679h1v1h-1zM530 679h1v1h-1zM546 679h1v1h-1zM562 679h1v1h-1zM578 679h1v1h-1zM594 679h1v1h-1zM610 679h1v1h-1zM626 679h1v1h-1zM642 679h1v1h-1zM658 679h1v1h-1zM674 679h1v1h-1zM690 679h1v1h-1zM706 679h1v1h-1zM722 679h1v1h-1zM738 679h1v1h-1zM754 679h1v1h-1zM770 679h1v1h-1zM786 679h1v1h-1zM802 679h1v1h-1zM818 679h1v1h-1zM834 679h1v1h-1zM850 679h1v1h-1zM866 679h1v1h-1zM882 679h1v1h-1zM898 679h1v1h-1zM914 679h1v1h-1zM930 679h1v1h-1zM946 679h1v1h-1zM962 679h1v1h-1zM978 679h1v1h-1zM994 679h1v1h-1zM1010 679h1v1h-1zM17 695h1v1h-1zM33 695h1v1h-1zM49 695h1v1h-1zM65 695h1v1h-1zM81 695h1v1h-1zM97 695h1v1h-1zM113 695h1v1h-1zM129 695h1v1h-1zM145 695h1v1h-1zM161 695h1v1h-1zM177 695h1v1h-1zM193 695h1v1h-1zM209 695h1v1h-1zM225 695h1v1h-1zM241 695h1v1h-1zM257 695h1v1h-1zM273 695h1v1h-1zM289 695h1v1h-1zM305 695h1v1h-1zM321 695h1v1h-1zM337 695h1v1h-1zM353 695h1v1h-1zM369 695h1v1h-1zM385 695h1v1h-1zM401 695h1v1h-1zM417 695h1v1h-1zM433 695h1v1h-1zM449 695h1v1h-1zM465 695h1v1h-1zM481 695h1v1h-1zM498 695h1v1h-1zM514 695h1v1h-1zM530 695h1v1h-1zM546 695h1v1h-1zM562 695h1v1h-1zM578 695h1v1h-1zM594 695h1v1h-1zM610 695h1v1h-1zM626 695h1v1h-1zM642 695h1v1h-1zM658 695h1v1h-1zM674 695h1v1h-1zM690 695h1v1h-1zM706 695h1v1h-1zM722 695h1v1h-1zM738 695h1v1h-1zM754 695h1v1h-1zM770 695h1v1h-1zM786 695h1v1h-1zM802 695h1v1h-1zM818 695h1v1h-1zM834 695h1v1h-1zM850 695h1v1h-1zM866 695h1v1h-1zM882 695h1v1h-1zM898 695h1v1h-1zM914 695h1v1h-1zM930 695h1v1h-1zM946 695h1v1h-1zM962 695h1v1h-1zM978 695h1v1h-1zM994 695h1v1h-1zM1010 695h1v1h-1zM17 711h1v1h-1zM33 711h1v1h-1zM49 711h1v1h-1zM65 711h1v1h-1zM81 711h1v1h-1zM97 711h1v1h-1zM113 711h1v1h-1zM129 711h1v1h-1zM145 711h1v1h-1zM161 711h1v1h-1zM177 711h1v1h-1zM193 711h1v1h-1zM209 711h1v1h-1zM225 711h1v1h-1zM241 711h1v1h-1zM257 711h1v1h-1zM273 711h1v1h-1zM289 711h1v1h-1zM305 711h1v1h-1zM321 711h1v1h-1zM337 711h1v1h-1zM353 711h1v1h-1zM369 711h1v1h-1zM385 711h1v1h-1zM401 711h1v1h-1zM417 711h1v1h-1zM433 711h1v1h-1zM449 711h1v1h-1zM465 711h1v1h-1zM481 711h1v1h-1zM498 711h1v1h-1zM514 711h1v1h-1zM530 711h1v1h-1zM546 711h1v1h-1zM562 711h1v1h-1zM578 711h1v1h-1zM594 711h1v1h-1zM610 711h1v1h-1zM626 711h1v1h-1zM642 711h1v1h-1zM658 711h1v1h-1zM674 711h1v1h-1zM690 711h1v1h-1zM706 711h1v1h-1zM722 711h1v1h-1zM738 711h1v1h-1zM754 711h1v1h-1zM770 711h1v1h-1zM786 711h1v1h-1zM802 711h1v1h-1zM818 711h1v1h-1zM834 711h1v1h-1zM850 711h1v1h-1zM866 711h1v1h-1zM882 711h1v1h-1zM898 711h1v1h-1zM914 711h1v1h-1zM930 711h1v1h-1zM946 711h1v1h-1zM962 711h1v1h-1zM978 711h1v1h-1zM994 711h1v1h-1zM1010 711h1v1h-1zM17 727h1v1h-1zM33 727h1v1h-1zM49 727h1v1h-1zM65 727h1v1h-1zM81 727h1v1h-1zM97 727h1v1h-1zM113 727h1v1h-1zM129 727h1v1h-1zM145 727h1v1h-1zM161 727h1v1h-1zM177 727h1v1h-1zM193 727h1v1h-1zM209 727h1v1h-1zM225 727h1v1h-1zM241 727h1v1h-1zM257 727h1v1h-1zM273 727h1v1h-1zM289 727h1v1h-1zM305 727h1v1h-1zM321 727h1v1h-1zM337 727h1v1h-1zM353 727h1v1h-1zM369 727h1v1h-1zM385 727h1v1h-1zM401 727h1v1h-1zM417 727h1v1h-1zM433 727h1v1h-1zM449 727h1v1h-1zM465 727h1v1h-1zM481 727h1v1h-1zM498 727h1v1h-1zM514 727h1v1h-1zM530 727h1v1h-1zM546 727h1v1h-1zM562 727h1v1h-1zM578 727h1v1h-1zM594 727h1v1h-1zM610 727h1v1h-1zM626 727h1v1h-1zM642 727h1v1h-1zM658 727h1v1h-1zM674 727h1v1h-1zM690 727h1v1h-1zM706 727h1v1h-1zM722 727h1v1h-1zM738 727h1v1h-1zM754 727h1v1h-1zM770 727h1v1h-1zM786 727h1v1h-1zM802 727h1v1h-1zM818 727h1v1h-1zM834 727h1v1h-1zM850 727h1v1h-1zM866 727h1v1h-1zM882 727h1v1h-1zM898 727h1v1h-1zM914 727h1v1h-1zM930 727h1v1h-1zM946 727h1v1h-1zM962 727h1v1h-1zM978 727h1v1h-1zM994 727h1v1h-1zM1010 727h1v1h-1zM17 743h1v1h-1zM33 743h1v1h-1zM49 743h1v1h-1zM65 743h1v1h-1zM81 743h1v1h-1zM97 743h1v1h-1zM113 743h1v1h-1zM129 743h1v1h-1zM145 743h1v1h-1zM161 743h1v1h-1zM177 743h1v1h-1zM193 743h1v1h-1zM209 743h1v1h-1zM225 743h1v1h-1zM241 743h1v1h-1zM257 743h1v1h-1zM273 743h1v1h-1zM289 743h1v1h-1zM305 743h1v1h-1zM321 743h1v1h-1zM337 743h1v1h-1zM353 743h1v1h-1zM369 743h1v1h-1zM385 743h1v1h-1zM401 743h1v1h-1zM417 743h1v1h-1zM433 743h1v1h-1zM449 743h1v1h-1zM465 743h1v1h-1zM481 743h1v1h-1zM498 743h1v1h-1zM514 743h1v1h-1zM530 743h1v1h-1zM546 743h1v1h-1zM562 743h1v1h-1zM578 743h1v1h-1zM594 743h1v1h-1zM610 743h1v1h-1zM626 743h1v1h-1zM642 743h1v1h-1zM658 743h1v1h-1zM674 743h1v1h-1zM690 743h1v1h-1zM706 743h1v1h-1zM722 743h1v1h-1zM738 743h1v1h-1zM754 743h1v1h-1zM770 743h1v1h-1zM786 743h1v1h-1zM802 743h1v1h-1zM818 743h1v1h-1zM834 743h1v1h-1zM850 743h1v1h-1zM866 743h1v1h-1zM882 743h1v1h-1zM898 743h1v1h-1zM914 743h1v1h-1zM930 743h1v1h-1zM946 743h1v1h-1zM962 743h1v1h-1zM978 743h1v1h-1zM994 743h1v1h-1zM1010 743h1v1h-1zM17 759h1v1h-1zM33 759h1v1h-1zM49 759h1v1h-1zM65 759h1v1h-1zM81 759h1v1h-1zM97 759h1v1h-1zM113 759h1v1h-1zM129 759h1v1h-1zM145 759h1v1h-1zM161 759h1v1h-1zM177 759h1v1h-1zM193 759h1v1h-1zM209 759h1v1h-1zM225 759h1v1h-1zM241 759h1v1h-1zM257 759h1v1h-1zM273 759h1v1h-1zM289 759h1v1h-1zM305 759h1v1h-1zM321 759h1v1h-1zM337 759h1v1h-1zM353 759h1v1h-1zM369 759h1v1h-1zM385 759h1v1h-1zM401 759h1v1h-1zM417 759h1v1h-1zM433 759h1v1h-1zM449 759h1v1h-1zM465 759h1v1h-1zM481 759h1v1h-1zM498 759h1v1h-1zM514 759h1v1h-1zM530 759h1v1h-1zM546 759h1v1h-1zM562 759h1v1h-1zM578 759h1v1h-1zM594 759h1v1h-1zM610 759h1v1h-1zM626 759h1v1h-1zM642 759h1v1h-1zM658 759h1v1h-1zM674 759h1v1h-1zM690 759h1v1h-1zM706 759h1v1h-1zM722 759h1v1h-1zM738 759h1v1h-1zM754 759h1v1h-1zM770 759h1v1h-1zM786 759h1v1h-1zM802 759h1v1h-1zM818 759h1v1h-1zM834 759h1v1h-1zM850 759h1v1h-1zM866 759h1v1h-1zM882 759h1v1h-1zM898 759h1v1h-1zM914 759h1v1h-1zM930 759h1v1h-1zM946 759h1v1h-1zM962 759h1v1h-1zM978 759h1v1h-1zM994 759h1v1h-1zM1010 759h1v1h-1zM17 775h1v1h-1zM33 775h1v1h-1zM49 775h1v1h-1zM65 775h1v1h-1zM81 775h1v1h-1zM97 775h1v1h-1zM113 775h1v1h-1zM129 775h1v1h-1zM145 775h1v1h-1zM161 775h1v1h-1zM177 775h1v1h-1zM193 775h1v1h-1zM209 775h1v1h-1zM225 775h1v1h-1zM241 775h1v1h-1zM257 775h1v1h-1zM273 775h1v1h-1zM289 775h1v1h-1zM305 775h1v1h-1zM321 775h1v1h-1zM337 775h1v1h-1zM353 775h1v1h-1zM369 775h1v1h-1zM385 775h1v1h-1zM401 775h1v1h-1zM417 775h1v1h-1zM433 775h1v1h-1zM449 775h1v1h-1zM465 775h1v1h-1zM481 775h1v1h-1zM498 775h1v1h-1zM514 775h1v1h-1zM530 775h1v1h-1zM546 775h1v1h-1zM562 775h1v1h-1zM578 775h1v1h-1zM594 775h1v1h-1zM610 775h1v1h-1zM626 775h1v1h-1zM642 775h1v1h-1zM658 775h1v1h-1zM674 775h1v1h-1zM690 775h1v1h-1zM706 775h1v1h-1zM722 775h1v1h-1zM738 775h1v1h-1zM754 775h1v1h-1zM770 775h1v1h-1zM786 775h1v1h-1zM802 775h1v1h-1zM818 775h1v1h-1zM834 775h1v1h-1zM850 775h1v1h-1zM866 775h1v1h-1zM882 775h1v1h-1zM898 775h1v1h-1zM914 775h1v1h-1zM930 775h1v1h-1zM946 775h1v1h-1zM962 775h1v1h-1zM978 775h1v1h-1zM994 775h1v1h-1zM1010 775h1v1h-1zM17 791h1v1h-1zM33 791h1v1h-1zM49 791h1v1h-1zM65 791h1v1h-1zM81 791h1v1h-1zM97 791h1v1h-1zM113 791h1v1h-1zM129 791h1v1h-1zM145 791h1v1h-1zM161 791h1v1h-1zM177 791h1v1h-1zM193 791h1v1h-1zM209 791h1v1h-1zM225 791h1v1h-1zM241 791h1v1h-1zM257 791h1v1h-1zM273 791h1v1h-1zM289 791h1v1h-1zM305 791h1v1h-1zM321 791h1v1h-1zM337 791h1v1h-1zM353 791h1v1h-1zM369 791h1v1h-1zM385 791h1v1h-1zM401 791h1v1h-1zM417 791h1v1h-1zM433 791h1v1h-1zM449 791h1v1h-1zM465 791h1v1h-1zM481 791h1v1h-1zM498 791h1v1h-1zM514 791h1v1h-1zM530 791h1v1h-1zM546 791h1v1h-1zM562 791h1v1h-1zM578 791h1v1h-1zM594 791h1v1h-1zM610 791h1v1h-1zM626 791h1v1h-1zM642 791h1v1h-1zM658 791h1v1h-1zM674 791h1v1h-1zM690 791h1v1h-1zM706 791h1v1h-1zM722 791h1v1h-1zM738 791h1v1h-1zM754 791h1v1h-1zM770 791h1v1h-1zM786 791h1v1h-1zM802 791h1v1h-1zM818 791h1v1h-1zM834 791h1v1h-1zM850 791h1v1h-1zM866 791h1v1h-1zM882 791h1v1h-1zM898 791h1v1h-1zM914 791h1v1h-1zM930 791h1v1h-1zM946 791h1v1h-1zM962 791h1v1h-1zM978 791h1v1h-1zM994 791h1v1h-1zM1010 791h1v1h-1zM17 807h1v1h-1zM33 807h1v1h-1zM49 807h1v1h-1zM65 807h1v1h-1zM81 807h1v1h-1zM97 807h1v1h-1zM113 807h1v1h-1zM129 807h1v1h-1zM145 807h1v1h-1zM161 807h1v1h-1zM177 807h1v1h-1zM193 807h1v1h-1zM209 807h1v1h-1zM225 807h1v1h-1zM241 807h1v1h-1zM257 807h1v1h-1zM273 807h1v1h-1zM289 807h1v1h-1zM305 807h1v1h-1zM321 807h1v1h-1zM337 807h1v1h-1zM353 807h1v1h-1zM369 807h1v1h-1zM385 807h1v1h-1zM401 807h1v1h-1zM417 807h1v1h-1zM433 807h1v1h-1zM449 807h1v1h-1zM465 807h1v1h-1zM481 807h1v1h-1zM498 807h1v1h-1zM514 807h1v1h-1zM530 807h1v1h-1zM546 807h1v1h-1zM562 807h1v1h-1zM578 807h1v1h-1zM594 807h1v1h-1zM610 807h1v1h-1zM626 807h1v1h-1zM642 807h1v1h-1zM658 807h1v1h-1zM674 807h1v1h-1zM690 807h1v1h-1zM706 807h1v1h-1zM722 807h1v1h-1zM738 807h1v1h-1zM754 807h1v1h-1zM770 807h1v1h-1zM786 807h1v1h-1zM802 807h1v1h-1zM818 807h1v1h-1zM834 807h1v1h-1zM850 807h1v1h-1zM866 807h1v1h-1zM882 807h1v1h-1zM898 807h1v1h-1zM914 807h1v1h-1zM930 807h1v1h-1zM946 807h1v1h-1zM962 807h1v1h-1zM978 807h1v1h-1zM994 807h1v1h-1zM1010 807h1v1h-1zM17 823h1v1h-1zM33 823h1v1h-1zM49 823h1v1h-1zM65 823h1v1h-1zM81 823h1v1h-1zM97 823h1v1h-1zM113 823h1v1h-1zM129 823h1v1h-1zM145 823h1v1h-1zM161 823h1v1h-1zM177 823h1v1h-1zM193 823h1v1h-1zM209 823h1v1h-1zM225 823h1v1h-1zM241 823h1v1h-1zM257 823h1v1h-1zM273 823h1v1h-1zM289 823h1v1h-1zM305 823h1v1h-1zM321 823h1v1h-1zM337 823h1v1h-1zM353 823h1v1h-1zM369 823h1v1h-1zM385 823h1v1h-1zM401 823h1v1h-1zM417 823h1v1h-1zM433 823h1v1h-1zM449 823h1v1h-1zM465 823h1v1h-1zM481 823h1v1h-1zM498 823h1v1h-1zM514 823h1v1h-1zM530 823h1v1h-1zM546 823h1v1h-1zM562 823h1v1h-1zM578 823h1v1h-1zM594 823h1v1h-1zM610 823h1v1h-1zM626 823h1v1h-1zM642 823h1v1h-1zM658 823h1v1h-1zM674 823h1v1h-1zM690 823h1v1h-1zM706 823h1v1h-1zM722 823h1v1h-1zM738 823h1v1h-1zM754 823h1v1h-1zM770 823h1v1h-1zM786 823h1v1h-1zM802 823h1v1h-1zM818 823h1v1h-1zM834 823h1v1h-1zM850 823h1v1h-1zM866 823h1v1h-1zM882 823h1v1h-1zM898 823h1v1h-1zM914 823h1v1h-1zM930 823h1v1h-1zM946 823h1v1h-1zM962 823h1v1h-1zM978 823h1v1h-1zM994 823h1v1h-1zM1010 823h1v1h-1zM17 839h1v1h-1zM33 839h1v1h-1zM49 839h1v1h-1zM65 839h1v1h-1zM81 839h1v1h-1zM97 839h1v1h-1zM113 839h1v1h-1zM129 839h1v1h-1zM145 839h1v1h-1zM161 839h1v1h-1zM177 839h1v1h-1zM193 839h1v1h-1zM209 839h1v1h-1zM225 839h1v1h-1zM241 839h1v1h-1zM257 839h1v1h-1zM273 839h1v1h-1zM289 839h1v1h-1zM305 839h1v1h-1zM321 839h1v1h-1zM337 839h1v1h-1zM353 839h1v1h-1zM369 839h1v1h-1zM385 839h1v1h-1zM401 839h1v1h-1zM417 839h1v1h-1zM433 839h1v1h-1zM449 839h1v1h-1zM465 839h1v1h-1zM481 839h1v1h-1zM498 839h1v1h-1zM514 839h1v1h-1zM530 839h1v1h-1zM546 839h1v1h-1zM562 839h1v1h-1zM578 839h1v1h-1zM594 839h1v1h-1zM610 839h1v1h-1zM626 839h1v1h-1zM642 839h1v1h-1zM658 839h1v1h-1zM674 839h1v1h-1zM690 839h1v1h-1zM706 839h1v1h-1zM722 839h1v1h-1zM738 839h1v1h-1zM754 839h1v1h-1zM770 839h1v1h-1zM786 839h1v1h-1zM802 839h1v1h-1zM818 839h1v1h-1zM834 839h1v1h-1zM850 839h1v1h-1zM866 839h1v1h-1zM882 839h1v1h-1zM898 839h1v1h-1zM914 839h1v1h-1zM930 839h1v1h-1zM946 839h1v1h-1zM962 839h1v1h-1zM978 839h1v1h-1zM994 839h1v1h-1zM1010 839h1v1h-1zM17 855h1v1h-1zM33 855h1v1h-1zM49 855h1v1h-1zM65 855h1v1h-1zM81 855h1v1h-1zM97 855h1v1h-1zM113 855h1v1h-1zM129 855h1v1h-1zM145 855h1v1h-1zM161 855h1v1h-1zM177 855h1v1h-1zM193 855h1v1h-1zM209 855h1v1h-1zM225 855h1v1h-1zM241 855h1v1h-1zM257 855h1v1h-1zM273 855h1v1h-1zM289 855h1v1h-1zM305 855h1v1h-1zM321 855h1v1h-1zM337 855h1v1h-1zM353 855h1v1h-1zM369 855h1v1h-1zM385 855h1v1h-1zM401 855h1v1h-1zM417 855h1v1h-1zM433 855h1v1h-1zM449 855h1v1h-1zM465 855h1v1h-1zM481 855h1v1h-1zM498 855h1v1h-1zM514 855h1v1h-1zM530 855h1v1h-1zM546 855h1v1h-1zM562 855h1v1h-1zM578 855h1v1h-1zM594 855h1v1h-1zM610 855h1v1h-1zM626 855h1v1h-1zM642 855h1v1h-1zM658 855h1v1h-1zM674 855h1v1h-1zM690 855h1v1h-1zM706 855h1v1h-1zM722 855h1v1h-1zM738 855h1v1h-1zM754 855h1v1h-1zM770 855h1v1h-1zM786 855h1v1h-1zM802 855h1v1h-1zM818 855h1v1h-1zM834 855h1v1h-1zM850 855h1v1h-1zM866 855h1v1h-1zM882 855h1v1h-1zM898 855h1v1h-1zM914 855h1v1h-1zM930 855h1v1h-1zM946 855h1v1h-1zM962 855h1v1h-1zM978 855h1v1h-1zM994 855h1v1h-1zM1010 855h1v1h-1zM17 871h1v1h-1zM33 871h1v1h-1zM49 871h1v1h-1zM65 871h1v1h-1zM81 871h1v1h-1zM97 871h1v1h-1zM113 871h1v1h-1zM129 871h1v1h-1zM145 871h1v1h-1zM161 871h1v1h-1zM177 871h1v1h-1zM193 871h1v1h-1zM209 871h1v1h-1zM225 871h1v1h-1zM241 871h1v1h-1zM257 871h1v1h-1zM273 871h1v1h-1zM289 871h1v1h-1zM305 871h1v1h-1zM321 871h1v1h-1zM337 871h1v1h-1zM353 871h1v1h-1zM369 871h1v1h-1zM385 871h1v1h-1zM401 871h1v1h-1zM417 871h1v1h-1zM433 871h1v1h-1zM449 871h1v1h-1zM465 871h1v1h-1zM481 871h1v1h-1zM498 871h1v1h-1zM514 871h1v1h-1zM530 871h1v1h-1zM546 871h1v1h-1zM562 871h1v1h-1zM578 871h1v1h-1zM594 871h1v1h-1zM610 871h1v1h-1zM626 871h1v1h-1zM642 871h1v1h-1zM658 871h1v1h-1zM674 871h1v1h-1zM690 871h1v1h-1zM706 871h1v1h-1zM722 871h1v1h-1zM738 871h1v1h-1zM754 871h1v1h-1zM770 871h1v1h-1zM786 871h1v1h-1zM802 871h1v1h-1zM818 871h1v1h-1zM834 871h1v1h-1zM850 871h1v1h-1zM866 871h1v1h-1zM882 871h1v1h-1zM898 871h1v1h-1zM914 871h1v1h-1zM930 871h1v1h-1zM946 871h1v1h-1zM962 871h1v1h-1zM978 871h1v1h-1zM994 871h1v1h-1zM1010 871h1v1h-1zM17 887h1v1h-1zM33 887h1v1h-1zM49 887h1v1h-1zM65 887h1v1h-1zM81 887h1v1h-1zM97 887h1v1h-1zM113 887h1v1h-1zM129 887h1v1h-1zM145 887h1v1h-1zM161 887h1v1h-1zM177 887h1v1h-1zM193 887h1v1h-1zM209 887h1v1h-1zM225 887h1v1h-1zM241 887h1v1h-1zM257 887h1v1h-1zM273 887h1v1h-1zM289 887h1v1h-1zM305 887h1v1h-1zM321 887h1v1h-1zM337 887h1v1h-1zM353 887h1v1h-1zM369 887h1v1h-1zM385 887h1v1h-1zM401 887h1v1h-1zM417 887h1v1h-1zM433 887h1v1h-1zM449 887h1v1h-1zM465 887h1v1h-1zM481 887h1v1h-1zM498 887h1v1h-1zM514 887h1v1h-1zM530 887h1v1h-1zM546 887h1v1h-1zM562 887h1v1h-1zM578 887h1v1h-1zM594 887h1v1h-1zM610 887h1v1h-1zM626 887h1v1h-1zM642 887h1v1h-1zM658 887h1v1h-1zM674 887h1v1h-1zM690 887h1v1h-1zM706 887h1v1h-1zM722 887h1v1h-1zM738 887h1v1h-1zM754 887h1v1h-1zM770 887h1v1h-1zM786 887h1v1h-1zM802 887h1v1h-1zM818 887h1v1h-1zM834 887h1v1h-1zM850 887h1v1h-1zM866 887h1v1h-1zM882 887h1v1h-1zM898 887h1v1h-1zM914 887h1v1h-1zM930 887h1v1h-1zM946 887h1v1h-1zM962 887h1v1h-1zM978 887h1v1h-1zM994 887h1v1h-1zM1010 887h1v1h-1z" fill="#000"/>
<path d="M185.5 671.5 L506.5 671.5 L506.5 759.5 L465.5 759.5" fill="none" stroke="#0000ff" stroke-width="1" />
<path d="M185.5 671.5 L185.5 735.5 L201.5 735.5" fill="none" stroke="#0000ff" stroke-width="1" />
<path d="M121.5 751.5 L121.5 687.5 L522.5 687.5 L522.5 807.5 L417.5 807.5 L417.5 783.5" fill="none" stroke="#0000ff" stroke-width="1" />
<path d="M241.5 687.5 L241.5 711.5" fill="none" stroke="#0000ff" stroke-width="1" />
<path d="M281.5 735.5 L377.5 735.5" fill="none" stroke="#0000ff" stroke-width="1" />
<path d="M297.5 599.5 L297.5 615.5" fill="none" stroke="#0000ff" stroke-width="1" />
<path d="M297.5 655.5 L297.5 735.5" fill="none" stroke="#0000ff" stroke-width="1" />
<path d="M297.5 599.5 L401.5 599.5" fill="none" stroke="#0000ff" stroke-width="1" />
<path d="M361.5 567.5 L361.5 615.5" fill="none" stroke="#0000ff" stroke-width="1" />
<path d="M361.5 655.5 L361.5 671.5" fill="none" stroke="#0000ff" stroke-width="1" />
<path d="M361.5 567.5 L522.5 567.5 L522.5 631.5 L554.5 631.5" fill="none" stroke="#0000ff" stroke-width="1" />
<path d="M401.5 639.5 L401.5 655.5 L554.5 655.5 L554.5 743.5 L874.5 743.5 L874.5 655.5 L882.5 655.5" fill="none" stroke="#0000ff" stroke-width="1" />
<path d="M201.5 759.5 L185.5 759.5 L185.5 807.5" fill="none" stroke="#0000ff" stroke-width="1" />
<path d="M57.5 807.5 L305.5 807.5" fill="none" stroke="#0000ff" stroke-width="1" />
<path d="M57.5 847.5 L57.5 855.5" fill="none" stroke="#0000ff" stroke-width="1" />
<path d="M241.5 783.5 L241.5 815.5" fill="none" stroke="#0000ff" stroke-width="1" />
<path d="M241.5 855.5 L241.5 879.5" fill="none" stroke="#0000ff" stroke-width="1" />
<path d="M337.5 807.5 L353.5 807.5 L353.5 759.5 L377.5 759.5" fill="none" stroke="#0000ff" stroke-width="1" />
<path d="M417.5 687.5 L417.5 711.5" fill="none" stroke="#0000ff" stroke-width="1" />
<path d="M594.5 631.5 L610.5 631.5" fill="none" stroke="#0000ff" stroke-width="1" />
<path d="M610.5 543.5 L610.5 647.5" fill="none" stroke="#0000ff" stroke-width="1" />
<path d="M610.5 687.5 L610.5 743.5" fill="none" stroke="#0000ff" stroke-width="1" />
<path d="M642.5 631.5 L658.5 631.5" fill="none" stroke="#0000ff" stroke-width="1" />
<path d="M650.5 631.5 L650.5 583.5 L658.5 583.5" fill="none" stroke="#0000ff" stroke-width="1" />
<path d="M698.5 583.5 L722.5 583.5" fill="none" stroke="#0000ff" stroke-width="1" />
<path d="M722.5 543.5 L722.5 639.5" fill="none" stroke="#0000ff" stroke-width="1" />
<path d="M690.5 639.5 L778.5 639.5" fill="none" stroke="#0000ff" stroke-width="1" />
<path d="M674.5 623.5 L674.5 607.5 L738.5 607.5 L738.5 671.5" fill="none" stroke="#0000ff" stroke-width="1" />
<path d="M690.5 671.5 L746.5 671.5 L746.5 791.5 L962.5 791.5 L962.5 615.5 L898.5 615.5 L898.5 631.5" fill="none" stroke="#0000ff" stroke-width="1" />
<path d="M690.5 671.5 L690.5 687.5" fill="none" stroke="#0000ff" stroke-width="1" />
<path d="M690.5 727.5 L690.5 759.5" fill="none" stroke="#0000ff" stroke-width="1" />
<path d="M690.5 799.5 L690.5 799.5" fill="none" stroke="#0000ff" stroke-width="1" />
<path d="M650.5 647.5 L658.5 647.5" fill="none" stroke="#0000ff" stroke-width="1" />
<path d="M650.5 647.5 L650.5 743.5" fill="none" stroke="#0000ff" stroke-width="1" />
<path d="M642.5 543.5 L722.5 543.5" fill="none" stroke="#0000ff" stroke-width="1" />
<path d="M818.5 639.5 L834.5 639.5" fill="none" stroke="#0000ff" stroke-width="1" />
<path d="M834.5 543.5 L834.5 655.5" fill="none" stroke="#0000ff" stroke-width="1" />
<path d="M834.5 695.5 L834.5 743.5" fill="none" stroke="#0000ff" stroke-width="1" />
<path d="M866.5 543.5 L946.5 543.5" fill="none" stroke="#0000ff" stroke-width="1" />
<path d="M866.5 639.5 L882.5 639.5" fill="none" stroke="#0000ff" stroke-width="1" />
<path d="M874.5 639.5 L874.5 591.5 L882.5 591.5" fill="none" stroke="#0000ff" stroke-width="1" />
<path d="M922.5 591.5 L946.5 591.5" fill="none" stroke="#0000ff" stroke-width="1" />
<path d="M946.5 543.5 L946.5 647.5 L914.5 647.5" fill="none" stroke="#0000ff" stroke-width="1" />
<path d="M112.5 751.5 L130.5 751.5 L121.5 760.5 Z" fill="none" stroke="#0000ff" stroke-width="1"/>
<path d="M48.5 855.5 L66.5 855.5 L57.5 864.5 Z" fill="none" stroke="#0000ff" stroke-width="1"/>
<path d="M232.5 879.5 L250.5 879.5 L241.5 888.5 Z" fill="none" stroke="#0000ff" stroke-width="1"/>
<path d="M681.5 799.5 L699.5 799.5 L690.5 808.5 Z" fill="none" stroke="#0000ff" stroke-width="1"/>
<path d="M665.5 655.5 L683.5 655.5 L674.5 664.5 Z" fill="none" stroke="#0000ff" stroke-width="1"/>
<path d="M745.5 623.5 L763.5 623.5 L754.5 632.5 Z" fill="none" stroke="#0000ff" stroke-width="1"/>
<path d="M889.5 663.5 L907.5 663.5 L898.5 672.5 Z" fill="none" stroke="#0000ff" stroke-width="1"/>
<path d="M969.5 631.5 L987.5 631.5 L978.5 640.5 Z" fill="none" stroke="#0000ff" stroke-width="1"/>
<rect x="239" y="685" width="5" height="5" fill="#0000ff"/>
<rect x="295" y="733" width="5" height="5" fill="#0000ff"/>
<rect x="359" y="597" width="5" height="5" fill="#0000ff"/>
<rect x="359" y="669" width="5" height="5" fill="#0000ff"/>
<rect x="415" y="685" width="5" height="5" fill="#0000ff"/>
<rect x="183" y="805" width="5" height="5" fill="#0000ff"/>
<rect x="608" y="629" width="5" height="5" fill="#0000ff"/>
<rect x="648" y="629" width="5" height="5" fill="#0000ff"/>
<rect x="720" y="581" width="5" height="5" fill="#0000ff"/>
<rect x="720" y="637" width="5" height="5" fill="#0000ff"/>
<rect x="736" y="669" width="5" height="5" fill="#0000ff"/>
<rect x="608" y="741" width="5" height="5" fill="#0000ff"/>
<rect x="648" y="741" width="5" height="5" fill="#0000ff"/>
<rect x="688" y="741" width="5" height="5" fill="#0000ff"/>
<rect x="832" y="637" width="5" height="5" fill="#0000ff"/>
<rect x="872" y="637" width="5" height="5" fill="#0000ff"/>
<rect x="944" y="589" width="5" height="5" fill="#0000ff"/>
<rect x="832" y="741" width="5" height="5" fill="#0000ff"/>
<circle cx="57.5" cy="826.8" r="15.5" fill="none" stroke="#000080" stroke-width="1" shape-rendering="geometricPrecision"/>
<circle cx="241.5" cy="834.8" r="15.5" fill="none" stroke="#000080" stroke-width="1" shape-rendering="geometricPrecision"/>
<circle cx="690.5" cy="706.8" r="15.5" fill="none" stroke="#000080" stroke-width="1" shape-rendering="geometricPrecision"/>
<circle cx="690.5" cy="778.8" r="15.5" fill="none" stroke="#000080" stroke-width="1" shape-rendering="geometricPrecision"/>
<circle cx="285.5" cy="759.5" r="3.2" fill="none" stroke="#000080" stroke-width="1.4" shape-rendering="geometricPrecision"/>
<circle cx="461.5" cy="759.5" r="3.2" fill="none" stroke="#000080" stroke-width="1.4" shape-rendering="geometricPrecision"/>
<circle cx="329.5" cy="807.5" r="3.2" fill="none" stroke="#000080" stroke-width="1.4" shape-rendering="geometricPrecision"/>
<path d="M297.5 615.5 L297.5 619.5 L305.5 623.5 L289.5 631.5 L305.5 639.5 L289.5 647.5 L297.5 651.5 L297.5 655.5" fill="none" stroke="#000080" stroke-width="1" />
<path d="M361.5 615.5 L361.5 619.5 L369.5 623.5 L353.5 631.5 L369.5 639.5 L353.5 647.5 L361.5 651.5 L361.5 655.5" fill="none" stroke="#000080" stroke-width="1" />
<path d="M401.5 599.5 L401.5 603.5 L409.5 607.5 L393.5 615.5 L409.5 623.5 L393.5 631.5 L401.5 635.5 L401.5 639.5" fill="none" stroke="#000080" stroke-width="1" />
<path d="M610.5 647.5 L610.5 651.5 L618.5 655.5 L602.5 663.5 L618.5 671.5 L602.5 679.5 L610.5 683.5 L610.5 687.5" fill="none" stroke="#000080" stroke-width="1" />
<path d="M754.5 583.5 L754.5 587.5 L762.5 591.5 L746.5 599.5 L762.5 607.5 L746.5 615.5 L754.5 619.5 L754.5 623.5" fill="none" stroke="#000080" stroke-width="1" />
<path d="M834.5 655.5 L834.5 659.5 L842.5 663.5 L826.5 671.5 L842.5 679.5 L826.5 687.5 L834.5 691.5 L834.5 695.5" fill="none" stroke="#000080" stroke-width="1" />
<path d="M978.5 591.5 L978.5 595.5 L986.5 599.5 L970.5 607.5 L986.5 615.5 L970.5 623.5 L978.5 627.5 L978.5 631.5" fill="none" stroke="#000080" stroke-width="1" />
<path d="M554.5 631.5 L558.5 631.5 L562.5 623.5 L570.5 639.5 L578.5 623.5 L586.5 639.5 L590.5 631.5 L594.5 631.5" fill="none" stroke="#000080" stroke-width="1" />
<path d="M658.5 583.5 L662.5 583.5 L666.5 575.5 L674.5 591.5 L682.5 575.5 L690.5 591.5 L694.5 583.5 L698.5 583.5" fill="none" stroke="#000080" stroke-width="1" />
<path d="M778.5 639.5 L782.5 639.5 L786.5 631.5 L794.5 647.5 L802.5 631.5 L810.5 647.5 L814.5 639.5 L818.5 639.5" fill="none" stroke="#000080" stroke-width="1" />
<path d="M882.5 591.5 L886.5 591.5 L890.5 583.5 L898.5 599.5 L906.5 583.5 L914.5 599.5 L918.5 591.5 L922.5 591.5" fill="none" stroke="#000080" stroke-width="1" />
<path d="M610.5 631.5 L624.5 631.5" fill="none" stroke="#000080" stroke-width="1" />
<path d="M628.5 631.5 L642.5 631.5" fill="none" stroke="#000080" stroke-width="1" />
<path d="M624.5 623.5 L624.5 639.5" fill="none" stroke="#000080" stroke-width="1" />
<path d="M628.5 623.5 L628.5 639.5" fill="none" stroke="#000080" stroke-width="1" />
<path d="M722.5 583.5 L736.5 583.5" fill="none" stroke="#000080" stroke-width="1" />
<path d="M740.5 583.5 L754.5 583.5" fill="none" stroke="#000080" stroke-width="1" />
<path d="M736.5 575.5 L736.5 591.5" fill="none" stroke="#000080" stroke-width="1" />
<path d="M740.5 575.5 L740.5 591.5" fill="none" stroke="#000080" stroke-width="1" />
<path d="M834.5 639.5 L848.5 639.5" fill="none" stroke="#000080" stroke-width="1" />
<path d="M852.5 639.5 L866.5 639.5" fill="none" stroke="#000080" stroke-width="1" />
<path d="M848.5 631.5 L848.5 647.5" fill="none" stroke="#000080" stroke-width="1" />
<path d="M852.5 631.5 L852.5 647.5" fill="none" stroke="#000080" stroke-width="1" />
<path d="M946.5 591.5 L960.5 591.5" fill="none" stroke="#000080" stroke-width="1" />
<path d="M964.5 591.5 L978.5 591.5" fill="none" stroke="#000080" stroke-width="1" />
<path d="M960.5 583.5 L960.5 599.5" fill="none" stroke="#000080" stroke-width="1" />
<path d="M964.5 583.5 L964.5 599.5" fill="none" stroke="#000080" stroke-width="1" />
<path d="M624.5 543.5 L624.5 551.5" fill="none" stroke="#000080" stroke-width="1" />
<path d="M628.5 543.5 L628.5 551.5" fill="none" stroke="#000080" stroke-width="1" />
<path d="M610.5 543.5 L624.5 543.5" fill="none" stroke="#000080" stroke-width="1" />
<path d="M628.5 543.5 L642.5 543.5" fill="none" stroke="#000080" stroke-width="1" />
<path d="M834.5 543.5 L848.5 543.5" fill="none" stroke="#000080" stroke-width="1" />
<path d="M852.5 543.5 L866.5 543.5" fill="none" stroke="#000080" stroke-width="1" />
<path d="M848.5 543.5 L848.5 551.5" fill="none" stroke="#000080" stroke-width="1" />
<path d="M852.5 543.5 L852.5 551.5" fill="none" stroke="#000080" stroke-width="1" />
<path d="M57.5 807.5 L57.5 811.5" fill="none" stroke="#000080" stroke-width="1" />
<path d="M57.5 843.5 L57.5 847.5" fill="none" stroke="#000080" stroke-width="1" />
<path d="M53.5 817.5 L61.5 817.5" fill="none" stroke="#000080" stroke-width="1" />
<path d="M57.5 813.5 L57.5 821.5" fill="none" stroke="#000080" stroke-width="1" />
<path d="M53.5 837.5 L61.5 837.5" fill="none" stroke="#000080" stroke-width="1" />
<path d="M241.5 815.5 L241.5 819.5" fill="none" stroke="#000080" stroke-width="1" />
<path d="M241.5 851.5 L241.5 855.5" fill="none" stroke="#000080" stroke-width="1" />
<path d="M237.5 825.5 L245.5 825.5" fill="none" stroke="#000080" stroke-width="1" />
<path d="M241.5 821.5 L241.5 829.5" fill="none" stroke="#000080" stroke-width="1" />
<path d="M237.5 845.5 L245.5 845.5" fill="none" stroke="#000080" stroke-width="1" />
<path d="M690.5 687.5 L690.5 691.5" fill="none" stroke="#000080" stroke-width="1" />
<path d="M690.5 723.5 L690.5 727.5" fill="none" stroke="#000080" stroke-width="1" />
<path d="M686.5 697.5 L694.5 697.5" fill="none" stroke="#000080" stroke-width="1" />
<path d="M690.5 693.5 L690.5 701.5" fill="none" stroke="#000080" stroke-width="1" />
<path d="M686.5 717.5 L694.5 717.5" fill="none" stroke="#000080" stroke-width="1" />
<path d="M690.5 759.5 L690.5 763.5" fill="none" stroke="#000080" stroke-width="1" />
<path d="M690.5 795.5 L690.5 799.5" fill="none" stroke="#000080" stroke-width="1" />
<path d="M686.5 769.5 L694.5 769.5" fill="none" stroke="#000080" stroke-width="1" />
<path d="M690.5 765.5 L690.5 773.5" fill="none" stroke="#000080" stroke-width="1" />
<path d="M686.5 789.5 L694.5 789.5" fill="none" stroke="#000080" stroke-width="1" />
<path d="M658.5 623.5 L658.5 655.5 L690.5 639.5 L658.5 623.5" fill="none" stroke="#000080" stroke-width="1" />
<path d="M674.5 631.5 L674.5 623.5" fill="none" stroke="#000080" stroke-width="1" />
<path d="M674.5 647.5 L674.5 655.5" fill="none" stroke="#000080" stroke-width="1" />
<path d="M660.5 631.5 L665.5 631.5" fill="none" stroke="#000080" stroke-width="1" />
<path d="M660.5 647.5 L665.5 647.5" fill="none" stroke="#000080" stroke-width="1" />
<path d="M662.5 644.5 L662.5 650.5" fill="none" stroke="#000080" stroke-width="1" />
<path d="M676.5 630.5 L681.5 630.5" fill="none" stroke="#000080" stroke-width="1" />
<path d="M678.5 627.5 L678.5 633.5" fill="none" stroke="#000080" stroke-width="1" />
<path d="M676.5 649.5 L681.5 649.5" fill="none" stroke="#000080" stroke-width="1" />
<path d="M882.5 631.5 L882.5 663.5 L914.5 647.5 L882.5 631.5" fill="none" stroke="#000080" stroke-width="1" />
<path d="M898.5 639.5 L898.5 631.5" fill="none" stroke="#000080" stroke-width="1" />
<path d="M898.5 655.5 L898.5 663.5" fill="none" stroke="#000080" stroke-width="1" />
<path d="M884.5 639.5 L889.5 639.5" fill="none" stroke="#000080" stroke-width="1" />
<path d="M884.5 655.5 L889.5 655.5" fill="none" stroke="#000080" stroke-width="1" />
<path d="M886.5 652.5 L886.5 658.5" fill="none" stroke="#000080" stroke-width="1" />
<path d="M900.5 638.5 L905.5 638.5" fill="none" stroke="#000080" stroke-width="1" />
<path d="M902.5 635.5 L902.5 641.5" fill="none" stroke="#000080" stroke-width="1" />
<path d="M900.5 657.5 L905.5 657.5" fill="none" stroke="#000080" stroke-width="1" />
<path d="M201.5 711.5 L281.5 711.5 L281.5 783.5 L201.5 783.5 L201.5 711.5" fill="none" stroke="#000080" stroke-width="1" />
<path d="M201.5 755.5 L205.5 759.5 L201.5 763.5" fill="none" stroke="#000080" stroke-width="1" />
<path d="M377.5 711.5 L457.5 711.5 L457.5 783.5 L377.5 783.5 L377.5 711.5" fill="none" stroke="#000080" stroke-width="1" />
<path d="M377.5 755.5 L381.5 759.5 L377.5 763.5" fill="none" stroke="#000080" stroke-width="1" />
<path d="M305.5 799.5 L305.5 815.5 L324.5 807.5 L305.5 799.5" fill="none" stroke="#000080" stroke-width="1" />
<path d="M333.5 807.5 L337.5 807.5" fill="none" stroke="#000080" stroke-width="1" />
<rect x="199.5" y="781.5" width="3" height="3" fill="#fff" stroke="#0000ff" stroke-width="1"/>
<rect x="288.5" y="757.5" width="3" height="3" fill="#fff" stroke="#0000ff" stroke-width="1"/>
<rect x="456.5" y="733.5" width="3" height="3" fill="#fff" stroke="#0000ff" stroke-width="1"/>
<rect x="375.5" y="781.5" width="3" height="3" fill="#fff" stroke="#0000ff" stroke-width="1"/>
<rect x="303.5" y="813.5" width="3" height="3" fill="#fff" stroke="#0000ff" stroke-width="1"/>
<text x="244.5" y="707.7" font-family="Liberation Sans" font-weight="bold" font-size="12.5" fill="#000" textLength="17.0" lengthAdjust="spacingAndGlyphs">A1</text>
<text x="228.5" y="724.7" font-family="Liberation Sans" font-weight="bold" font-size="12.5" fill="#000" textLength="25.0" lengthAdjust="spacingAndGlyphs">PRE</text>
<text x="204.5" y="738.7" font-family="Liberation Sans" font-weight="bold" font-size="12.5" fill="#000" textLength="10.0" lengthAdjust="spacingAndGlyphs">D</text>
<text x="204.5" y="762.7" font-family="Liberation Sans" font-weight="bold" font-size="12.5" fill="#000" textLength="24.0" lengthAdjust="spacingAndGlyphs">CLK</text>
<text x="269.5" y="738.7" font-family="Liberation Sans" font-weight="bold" font-size="12.5" fill="#000" textLength="10.0" lengthAdjust="spacingAndGlyphs">Q</text>
<text x="269.5" y="762.7" font-family="Liberation Sans" font-weight="bold" font-size="12.5" fill="#000" textLength="10.0" lengthAdjust="spacingAndGlyphs">Q</text>
<text x="228.5" y="778.7" font-family="Liberation Sans" font-weight="bold" font-size="12.5" fill="#000" textLength="25.0" lengthAdjust="spacingAndGlyphs">CLR</text>
<text x="420.5" y="707.7" font-family="Liberation Sans" font-weight="bold" font-size="12.5" fill="#000" textLength="18.0" lengthAdjust="spacingAndGlyphs">A2</text>
<text x="404.5" y="724.7" font-family="Liberation Sans" font-weight="bold" font-size="12.5" fill="#000" textLength="25.0" lengthAdjust="spacingAndGlyphs">PRE</text>
<text x="380.5" y="738.7" font-family="Liberation Sans" font-weight="bold" font-size="12.5" fill="#000" textLength="10.0" lengthAdjust="spacingAndGlyphs">D</text>
<text x="380.5" y="762.7" font-family="Liberation Sans" font-weight="bold" font-size="12.5" fill="#000" textLength="24.0" lengthAdjust="spacingAndGlyphs">CLK</text>
<text x="445.5" y="738.7" font-family="Liberation Sans" font-weight="bold" font-size="12.5" fill="#000" textLength="10.0" lengthAdjust="spacingAndGlyphs">Q</text>
<text x="445.5" y="762.7" font-family="Liberation Sans" font-weight="bold" font-size="12.5" fill="#000" textLength="10.0" lengthAdjust="spacingAndGlyphs">Q</text>
<text x="404.5" y="778.7" font-family="Liberation Sans" font-weight="bold" font-size="12.5" fill="#000" textLength="25.0" lengthAdjust="spacingAndGlyphs">CLR</text>
<text x="308.5" y="795.2" font-family="Liberation Sans" font-weight="bold" font-size="12.5" fill="#000" textLength="18.0" lengthAdjust="spacingAndGlyphs">A3</text>
<text x="307.0" y="631.7" font-family="Liberation Sans" font-weight="bold" font-size="12.5" fill="#000" textLength="16.5" lengthAdjust="spacingAndGlyphs">R1</text>
<text x="307.0" y="649.7" font-family="Liberation Sans" font-weight="bold" font-size="12.5" fill="#000" textLength="15.5" lengthAdjust="spacingAndGlyphs">1k</text>
<text x="370.5" y="631.7" font-family="Liberation Sans" font-weight="bold" font-size="12.5" fill="#000" textLength="17.0" lengthAdjust="spacingAndGlyphs">R2</text>
<text x="370.5" y="649.7" font-family="Liberation Sans" font-weight="bold" font-size="12.5" fill="#000" textLength="16.0" lengthAdjust="spacingAndGlyphs">1k</text>
<text x="410.5" y="615.2" font-family="Liberation Sans" font-weight="bold" font-size="12.5" fill="#000" textLength="17.5" lengthAdjust="spacingAndGlyphs">R3</text>
<text x="410.5" y="633.2" font-family="Liberation Sans" font-weight="bold" font-size="12.5" fill="#000" textLength="25.0" lengthAdjust="spacingAndGlyphs">330</text>
<text x="565.0" y="620.0" font-family="Liberation Sans" font-weight="bold" font-size="12.5" fill="#000" textLength="17.5" lengthAdjust="spacingAndGlyphs">R4</text>
<text x="560.0" y="649.7" font-family="Liberation Sans" font-weight="bold" font-size="12.5" fill="#000" textLength="27.5" lengthAdjust="spacingAndGlyphs">7.8k</text>
<text x="617.5" y="620.2" font-family="Liberation Sans" font-weight="bold" font-size="12.5" fill="#000" textLength="17.0" lengthAdjust="spacingAndGlyphs">C3</text>
<text x="613.5" y="650.2" font-family="Liberation Sans" font-weight="bold" font-size="12.5" fill="#000" textLength="25.0" lengthAdjust="spacingAndGlyphs">82n</text>
<text x="613.5" y="562.7" font-family="Liberation Sans" font-weight="bold" font-size="12.5" fill="#000" textLength="25.0" lengthAdjust="spacingAndGlyphs">82n</text>
<text x="583.0" y="661.2" font-family="Liberation Sans" font-weight="bold" font-size="12.5" fill="#000" textLength="16.0" lengthAdjust="spacingAndGlyphs">R5</text>
<text x="568.0" y="678.7" font-family="Liberation Sans" font-weight="bold" font-size="12.5" fill="#000" textLength="31.0" lengthAdjust="spacingAndGlyphs">1000</text>
<text x="669.3" y="572.0" font-family="Liberation Sans" font-weight="bold" font-size="12.5" fill="#000" textLength="17.2" lengthAdjust="spacingAndGlyphs">R6</text>
<text x="661.0" y="602.5" font-family="Liberation Sans" font-weight="bold" font-size="12.5" fill="#000" textLength="34.5" lengthAdjust="spacingAndGlyphs">17.2k</text>
<text x="729.5" y="572.3" font-family="Liberation Sans" font-weight="bold" font-size="12.5" fill="#000" textLength="16.0" lengthAdjust="spacingAndGlyphs">C1</text>
<text x="730.5" y="602.5" font-family="Liberation Sans" font-weight="bold" font-size="12.5" fill="#000" textLength="15.0" lengthAdjust="spacingAndGlyphs">1µ</text>
<text x="763.5" y="599.3" font-family="Liberation Sans" font-weight="bold" font-size="12.5" fill="#000" textLength="17.0" lengthAdjust="spacingAndGlyphs">R7</text>
<text x="764.0" y="617.5" font-family="Liberation Sans" font-weight="bold" font-size="12.5" fill="#000" textLength="15.5" lengthAdjust="spacingAndGlyphs">1k</text>
<text x="681.8" y="627.4" font-family="Liberation Sans" font-weight="bold" font-size="12.5" fill="#000" textLength="15.7" lengthAdjust="spacingAndGlyphs">U1</text>
<text x="701.2" y="691.7" font-family="Liberation Sans" font-weight="bold" font-size="12.5" fill="#000" textLength="17.3" lengthAdjust="spacingAndGlyphs">V4</text>
<text x="702.5" y="731.3" font-family="Liberation Sans" font-weight="bold" font-size="12.5" fill="#000" textLength="19.4" lengthAdjust="spacingAndGlyphs">2.5</text>
<text x="701.2" y="763.7" font-family="Liberation Sans" font-weight="bold" font-size="12.5" fill="#000" textLength="17.3" lengthAdjust="spacingAndGlyphs">V2</text>
<text x="702.5" y="803.3" font-family="Liberation Sans" font-weight="bold" font-size="12.5" fill="#000" textLength="19.4" lengthAdjust="spacingAndGlyphs">2.5</text>
<text x="789.2" y="628.2" font-family="Liberation Sans" font-weight="bold" font-size="12.5" fill="#000" textLength="17.0" lengthAdjust="spacingAndGlyphs">R8</text>
<text x="783.8" y="658.5" font-family="Liberation Sans" font-weight="bold" font-size="12.5" fill="#000" textLength="27.7" lengthAdjust="spacingAndGlyphs">7.8k</text>
<text x="841.5" y="628.2" font-family="Liberation Sans" font-weight="bold" font-size="12.5" fill="#000" textLength="16.0" lengthAdjust="spacingAndGlyphs">C5</text>
<text x="837.9" y="658.5" font-family="Liberation Sans" font-weight="bold" font-size="12.5" fill="#000" textLength="24.6" lengthAdjust="spacingAndGlyphs">82n</text>
<text x="837.9" y="562.9" font-family="Liberation Sans" font-weight="bold" font-size="12.5" fill="#000" textLength="24.6" lengthAdjust="spacingAndGlyphs">82n</text>
<text x="807.0" y="669.0" font-family="Liberation Sans" font-weight="bold" font-size="12.5" fill="#000" textLength="15.5" lengthAdjust="spacingAndGlyphs">R9</text>
<text x="792.3" y="687.2" font-family="Liberation Sans" font-weight="bold" font-size="12.5" fill="#000" textLength="31.4" lengthAdjust="spacingAndGlyphs">1000</text>
<text x="888.7" y="580.3" font-family="Liberation Sans" font-weight="bold" font-size="12.5" fill="#000" textLength="25.4" lengthAdjust="spacingAndGlyphs">R10</text>
<text x="884.5" y="610.7" font-family="Liberation Sans" font-weight="bold" font-size="12.5" fill="#000" textLength="35.0" lengthAdjust="spacingAndGlyphs">17.2k</text>
<text x="953.8" y="580.3" font-family="Liberation Sans" font-weight="bold" font-size="12.5" fill="#000" textLength="16.3" lengthAdjust="spacingAndGlyphs">C6</text>
<text x="954.2" y="610.7" font-family="Liberation Sans" font-weight="bold" font-size="12.5" fill="#000" textLength="15.9" lengthAdjust="spacingAndGlyphs">1µ</text>
<text x="988.3" y="607.1" font-family="Liberation Sans" font-weight="bold" font-size="12.5" fill="#000" textLength="23.9" lengthAdjust="spacingAndGlyphs">R11</text>
<text x="988.3" y="625.2" font-family="Liberation Sans" font-weight="bold" font-size="12.5" fill="#000" textLength="16.2" lengthAdjust="spacingAndGlyphs">1k</text>
<text x="905.7" y="635.2" font-family="Liberation Sans" font-weight="bold" font-size="12.5" fill="#000" textLength="16.5" lengthAdjust="spacingAndGlyphs">U2</text>
<text x="68.8" y="811.7" font-family="Liberation Sans" font-weight="bold" font-size="12.5" fill="#000" textLength="16.1" lengthAdjust="spacingAndGlyphs">V1</text>
<text x="69.3" y="850.7" font-family="Liberation Sans" font-weight="bold" font-size="12.5" fill="#000" textLength="186.2" lengthAdjust="spacingAndGlyphs">PULSE(0 5 1n 1n 1n 0.5m 1m)</text>
<text x="41.0" y="871.0" font-family="Liberation Sans" font-weight="bold" font-size="12.5" fill="#000" textLength="42.2" lengthAdjust="spacingAndGlyphs">.tran 5</text>
<text x="251.9" y="819.2" font-family="Liberation Sans" font-weight="bold" font-size="12.5" fill="#000" textLength="17.5" lengthAdjust="spacingAndGlyphs">V3</text>
<text x="252.1" y="859.7" font-family="Liberation Sans" font-weight="bold" font-size="12.5" fill="#000" textLength="200.6" lengthAdjust="spacingAndGlyphs">PULSE(0 5 2m 1n 1n 50m 100m)</text>
<text x="477.2" y="859.5" font-family="Liberation Sans" font-weight="bold" font-size="12.5" fill="#000" textLength="252.7" lengthAdjust="spacingAndGlyphs">.wave cw.wav 16 44.1k V(p001) V(p001)</text>
<text x="473.1" y="887.2" font-family="Liberation Sans" font-weight="bold" font-size="12.5" fill="#000" textLength="259.4" lengthAdjust="spacingAndGlyphs">.wave cw1.wav 16 44.1k v(p002) v(p002)</text>
<path d="M243.5 704.5l2 -2l2 2l-2 2zM419.5 704.5l2 -2l2 2l-2 2zM307.5 791.5l2 -2l2 2l-2 2zM305.5 628.5l2 -2l2 2l-2 2zM306.5 646.5l2 -2l2 2l-2 2zM369.5 628.5l2 -2l2 2l-2 2zM370.5 646.5l2 -2l2 2l-2 2zM409.5 612.5l2 -2l2 2l-2 2zM409.5 630.5l2 -2l2 2l-2 2zM762.5 596.5l2 -2l2 2l-2 2zM762.5 614.5l2 -2l2 2l-2 2zM987.5 603.5l2 -2l2 2l-2 2zM987.5 622.5l2 -2l2 2l-2 2zM680.5 624.5l2 -2l2 2l-2 2zM904.5 632.5l2 -2l2 2l-2 2zM700.5 688.5l2 -2l2 2l-2 2zM701.5 728.5l2 -2l2 2l-2 2zM700.5 760.5l2 -2l2 2l-2 2zM701.5 800.5l2 -2l2 2l-2 2zM597.5 658.5l2 -2l2 2l-2 2zM597.5 675.5l2 -2l2 2l-2 2zM820.5 665.5l2 -2l2 2l-2 2zM821.5 684.5l2 -2l2 2l-2 2zM572.5 623.5l2 -2l2 2l-2 2zM572.5 639.5l2 -2l2 2l-2 2zM624.5 623.5l2 -2l2 2l-2 2zM624.5 639.5l2 -2l2 2l-2 2zM676.5 575.5l2 -2l2 2l-2 2zM676.5 591.5l2 -2l2 2l-2 2zM736.5 575.5l2 -2l2 2l-2 2zM736.5 591.5l2 -2l2 2l-2 2zM796.5 631.5l2 -2l2 2l-2 2zM796.5 647.5l2 -2l2 2l-2 2zM848.5 631.5l2 -2l2 2l-2 2zM848.5 647.5l2 -2l2 2l-2 2zM900.5 583.5l2 -2l2 2l-2 2zM900.5 599.5l2 -2l2 2l-2 2zM960.5 583.5l2 -2l2 2l-2 2zM960.5 599.5l2 -2l2 2l-2 2zM624.5 551.5l2 -2l2 2l-2 2zM848.5 551.5l2 -2l2 2l-2 2zM250.5 816.5l2 -2l2 2l-2 2zM67.5 808.5l2 -2l2 2l-2 2zM68.5 847.5l2 -2l2 2l-2 2zM39.5 867.5l2 -2l2 2l-2 2zM251.5 856.5l2 -2l2 2l-2 2zM475.5 856.5l2 -2l2 2l-2 2zM471.5 884.5l2 -2l2 2l-2 2z" fill="none" stroke="#000" stroke-width="0.9" shape-rendering="geometricPrecision"/>
<rect x="270" y="751" width="9" height="2" fill="#000"/>
<rect x="446" y="751" width="9" height="2" fill="#000"/></g></svg>
<div class="a" style="left:1px;top:907px;width:1027px;height:1px;background:#d8d4c8;"></div>
<div class="a" style="left:1px;top:909px;width:1027px;height:1px;background:#fff;"></div>
<div class="a" style="left:1px;top:928px;width:1027px;height:1px;background:#fff;"></div>
<div class="a" style="left:1008px;top:912px;width:1px;height:16px;background:#c8c8c8;"></div>
<div class="a" style="left:1024px;top:919px;width:2px;height:2px;background:#b4b4b4;"></div>
<div class="a" style="left:1021px;top:922px;width:2px;height:2px;background:#b4b4b4;"></div>
<div class="a" style="left:1024px;top:922px;width:2px;height:2px;background:#b4b4b4;"></div>
<div class="a" style="left:1018px;top:925px;width:2px;height:2px;background:#b4b4b4;"></div>
<div class="a" style="left:1021px;top:925px;width:2px;height:2px;background:#b4b4b4;"></div>
<div class="a" style="left:1024px;top:925px;width:2px;height:2px;background:#b4b4b4;"></div>
</body></html>
